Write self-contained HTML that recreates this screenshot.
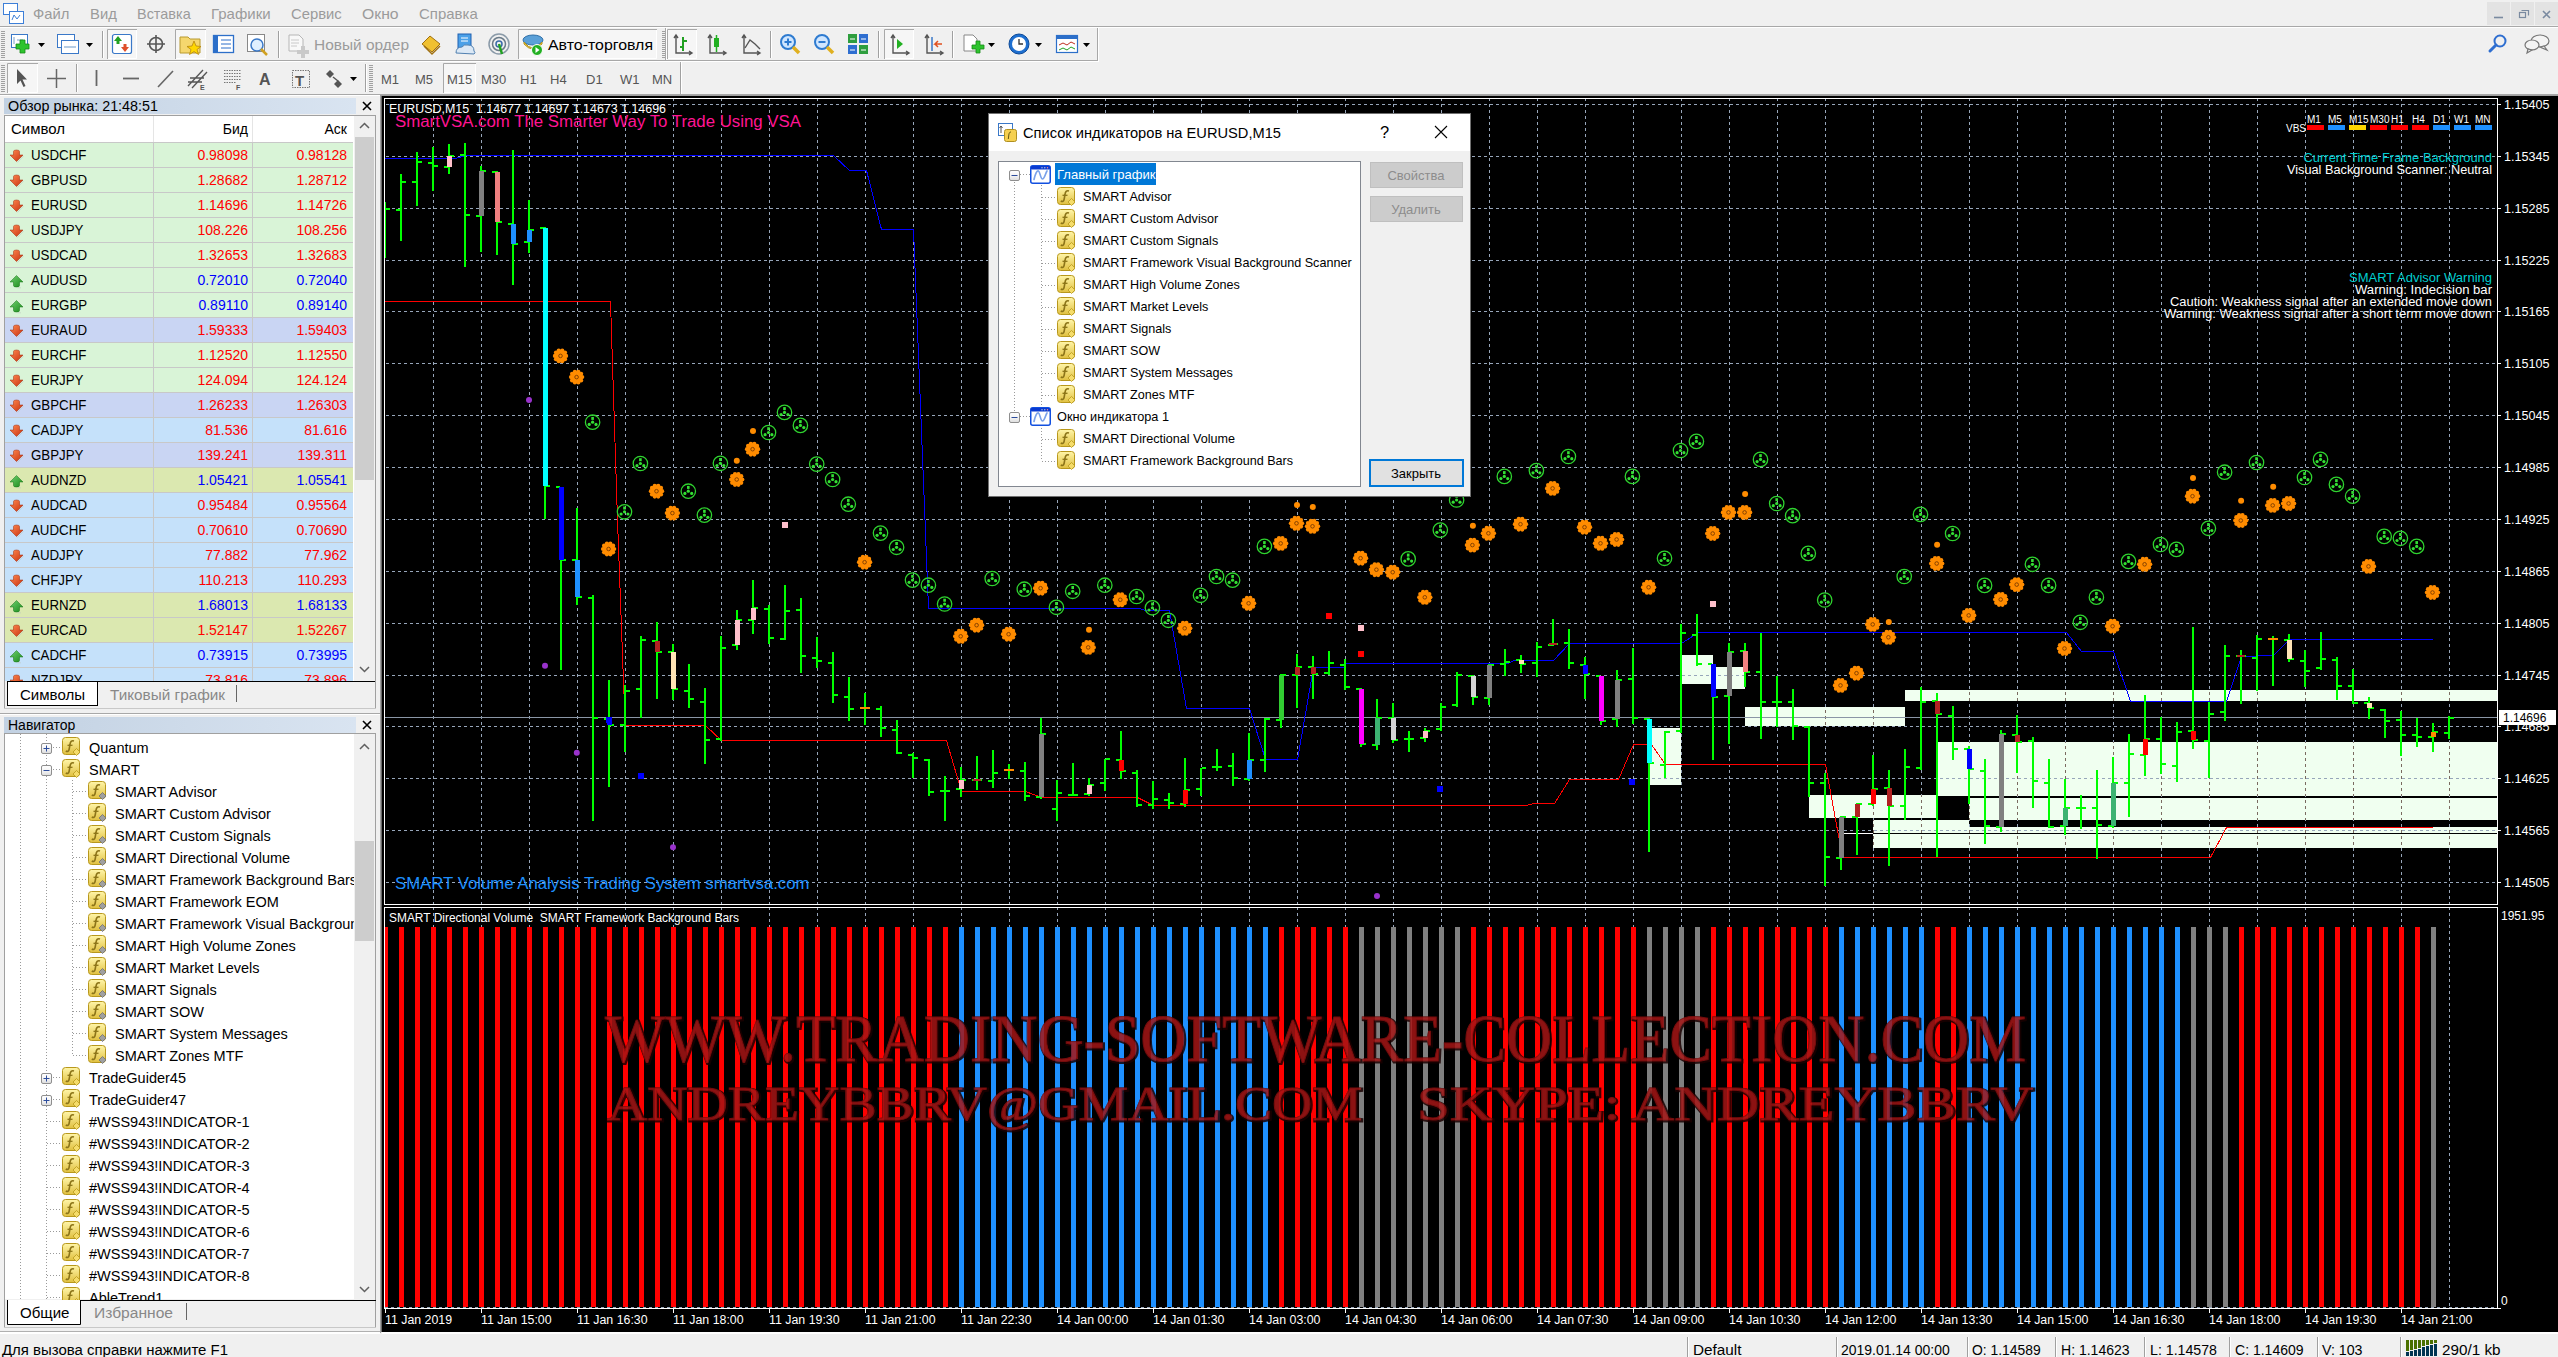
<!DOCTYPE html>
<html><head><meta charset="utf-8"><style>
html,body{margin:0;padding:0;width:2558px;height:1357px;overflow:hidden;background:#f0f0f0;}
body{position:relative;font-family:"Liberation Sans", sans-serif;}
svg text{white-space:pre;}
</style></head><body>
<svg style="position:absolute;left:0;top:0" width="2558" height="1357" font-family='"Liberation Sans", sans-serif'>
<defs>
<linearGradient id="hdr" x1="0" x2="1" y1="0" y2="0"><stop offset="0" stop-color="#c2d1e2"/><stop offset="1" stop-color="#d9e4f1"/></linearGradient>
<linearGradient id="fold" x1="0" x2="0" y1="0" y2="1"><stop offset="0" stop-color="#fff5a8"/><stop offset="1" stop-color="#e0c040"/></linearGradient>
<g id="ind">
 <rect x="0.5" y="0.5" width="17" height="17" rx="3" fill="url(#fold)" stroke="#b8981c"/>
 <path d="M12 4 C9.5 3.2 8.3 4.8 8 7.5 L7.2 12 C6.8 14.5 5.5 15 3.8 14" fill="none" stroke="#8c7418" stroke-width="1.6"/>
 <path d="M5.5 8.3 H10.5" stroke="#8c7418" stroke-width="1.3"/>
 <path d="M14.5 11.5 L18 15 L14.5 18.5 L11 15 Z" fill="#a0a0a0" stroke="#707070" stroke-width="0.8"/>
</g>
<g id="indf">
 <rect x="0.5" y="0.5" width="17" height="17" rx="3" fill="url(#fold)" stroke="#b8981c"/>
 <path d="M12 4 C9.5 3.2 8.3 4.8 8 7.5 L7.2 12 C6.8 14.5 5.5 15 3.8 14" fill="none" stroke="#8c7418" stroke-width="1.6"/>
 <path d="M5.5 8.3 H10.5" stroke="#8c7418" stroke-width="1.3"/>
 <path d="M14.5 11.5 L18 15 L14.5 18.5 L11 15 Z" fill="#f5dc6a" stroke="#b8981c" stroke-width="0.8"/>
</g>
<linearGradient id="gdn" x1="0" x2="1" y1="0" y2="1"><stop offset="0" stop-color="#ff8a50"/><stop offset="1" stop-color="#c83010"/></linearGradient>
<linearGradient id="gup" x1="0" x2="1" y1="0" y2="1"><stop offset="0" stop-color="#70d070"/><stop offset="1" stop-color="#1a8a1a"/></linearGradient>
<g id="dn"><path d="M4.5 12 L1 8 L4.5 8 Z" fill="#000" opacity="0"/><path d="M3.5 1.5 Q3.5 0 6.5 0 Q9.5 0 9.5 1.5 V5 H13 L6.5 11.5 L0 5 H3.5 Z" fill="url(#gdn)" stroke="#a02808" stroke-width="0.5"/><path d="M7.5 12.5 L13.5 6" stroke="#c0c8c0" stroke-width="1" opacity="0.6"/></g>
<g id="up"><path d="M3.5 10.5 Q3.5 12 6.5 12 Q9.5 12 9.5 10.5 V7 H13 L6.5 0.5 L0 7 H3.5 Z" fill="url(#gup)" stroke="#157015" stroke-width="0.5"/><path d="M7.5 12.8 H11" stroke="#c0c8c0" stroke-width="1" opacity="0.6"/></g>
<linearGradient id="bxg" x1="0" x2="0" y1="0" y2="1"><stop offset="0" stop-color="#ffffff"/><stop offset="0.5" stop-color="#f4f4f4"/><stop offset="1" stop-color="#dcdcdc"/></linearGradient>
<g id="plus"><rect x="0.5" y="0.5" width="10" height="10" rx="1.5" fill="url(#bxg)" stroke="#8e8e8e"/><path d="M2.5 5.5 H8.5 M5.5 2.5 V8.5" stroke="#2c4c9c" stroke-width="1"/></g>
<g id="minus"><rect x="0.5" y="0.5" width="10" height="10" rx="1.5" fill="url(#bxg)" stroke="#8e8e8e"/><path d="M2.5 5.5 H8.5" stroke="#2c4c9c" stroke-width="1"/></g>
<g id="chico"><rect x="0.75" y="0.75" width="19.5" height="17.5" rx="2" fill="#fff" stroke="#1250e0" stroke-width="1.5"/><rect x="1" y="1" width="19" height="3.5" rx="1" fill="#0a3ad0"/><circle cx="12" cy="2.8" r="0.7" fill="#bcd"/><circle cx="14.8" cy="2.8" r="0.7" fill="#bcd"/><circle cx="17.5" cy="2.8" r="0.7" fill="#f88"/><path d="M4 14.5 C5.5 8 7 5.5 8.5 6 C10 6.5 10.5 14 12.5 14 C14.5 14 15.5 8 17 6" fill="none" stroke="#7aa2ea" stroke-width="1.7" stroke-linecap="round"/></g>
</defs>

<rect x="0" y="0" width="2558" height="1357" fill="#f0f0f0"/>
<g transform="translate(3,3)"><rect x="0.5" y="0.5" width="14" height="11" fill="#fff" stroke="#3d7fd8"/><rect x="6.5" y="8.5" width="14" height="12" fill="#fff" stroke="#3d7fd8"/><path d="M9 17 L11 12 L14 16 L17 12" stroke="#3d7fd8" fill="none"/></g>
<text x="33" y="19" font-size="15" fill="#9b9b9b" textLength="36.4" lengthAdjust="spacingAndGlyphs">Файл</text>
<text x="90" y="19" font-size="15" fill="#9b9b9b" textLength="26.8" lengthAdjust="spacingAndGlyphs">Вид</text>
<text x="137" y="19" font-size="15" fill="#9b9b9b" textLength="53.7" lengthAdjust="spacingAndGlyphs">Вставка</text>
<text x="211" y="19" font-size="15" fill="#9b9b9b" textLength="59.6" lengthAdjust="spacingAndGlyphs">Графики</text>
<text x="291" y="19" font-size="15" fill="#9b9b9b" textLength="50.7" lengthAdjust="spacingAndGlyphs">Сервис</text>
<text x="362" y="19" font-size="15" fill="#9b9b9b" textLength="36.6" lengthAdjust="spacingAndGlyphs">Окно</text>
<text x="419" y="19" font-size="15" fill="#9b9b9b" textLength="58.7" lengthAdjust="spacingAndGlyphs">Справка</text>
<rect x="2487" y="2" width="23" height="23" fill="#e3e3e3"/>
<rect x="2511" y="2" width="23" height="23" fill="#e3e3e3"/>
<rect x="2535" y="2" width="23" height="23" fill="#e3e3e3"/>
<path d="M2494 17.5 H2503" stroke="#7a8aa0" stroke-width="1.6"/>
<rect x="2519.5" y="12.5" width="6" height="5" fill="none" stroke="#7a8aa0" stroke-width="1.2"/><path d="M2521.5 10.5 H2528.5 V15.5" fill="none" stroke="#7a8aa0" stroke-width="1.2"/>
<path d="M2543 11 L2550 18 M2550 11 L2543 18" stroke="#7a8aa0" stroke-width="1.6"/>
<rect x="0" y="26" width="2558" height="1" fill="#a8a8a8"/>
<rect x="0" y="27" width="2558" height="1" fill="#ffffff"/>
<rect x="0" y="60" width="1098" height="1" fill="#a8a8a8"/>
<rect x="0" y="61" width="1099" height="1" fill="#ffffff"/>
<rect x="1097" y="28" width="1" height="33" fill="#a8a8a8"/>
<rect x="1098" y="28" width="1" height="34" fill="#ffffff"/>
<rect x="0" y="94" width="2558" height="1" fill="#a8a8a8"/>
<rect x="0" y="95" width="380" height="1" fill="#ffffff"/>
<rect x="1" y="31" width="4" height="1" fill="#a0a0a0"/><rect x="1" y="33" width="4" height="1" fill="#a0a0a0"/><rect x="1" y="35" width="4" height="1" fill="#a0a0a0"/><rect x="1" y="37" width="4" height="1" fill="#a0a0a0"/><rect x="1" y="39" width="4" height="1" fill="#a0a0a0"/><rect x="1" y="41" width="4" height="1" fill="#a0a0a0"/><rect x="1" y="43" width="4" height="1" fill="#a0a0a0"/><rect x="1" y="45" width="4" height="1" fill="#a0a0a0"/><rect x="1" y="47" width="4" height="1" fill="#a0a0a0"/><rect x="1" y="49" width="4" height="1" fill="#a0a0a0"/><rect x="1" y="51" width="4" height="1" fill="#a0a0a0"/><rect x="1" y="53" width="4" height="1" fill="#a0a0a0"/><rect x="1" y="55" width="4" height="1" fill="#a0a0a0"/><rect x="1" y="57" width="4" height="1" fill="#a0a0a0"/>
<g transform="translate(11,34)"><rect x="0.5" y="0.5" width="16" height="13" fill="#fff" stroke="#3a78c8"/><path d="M3 3 V10 M6 6 h6" stroke="#7aa0c8"/><path d="M9 6 h5 v4 h4 v5 h-4 v4 h-5 v-4 h-4 v-5 h4 z" fill="#2ec42e" stroke="#168a16" stroke-width="0.8"/></g>
<path d="M38 43 h7 l-3.5 4 z" fill="#000"/>
<g transform="translate(57,34)"><rect x="0.5" y="0.5" width="17" height="13" fill="#fff" stroke="#3a78c8"/><rect x="4.5" y="6.5" width="17" height="13" fill="#fff" stroke="#3a78c8"/><path d="M7 13 h12" stroke="#6a98c8"/></g>
<path d="M86 43 h7 l-3.5 4 z" fill="#000"/>
<rect x="102" y="31" width="1" height="27" fill="#a0a0a0"/><rect x="103" y="31" width="1" height="27" fill="#ffffff"/>
<rect x="107" y="29" width="30" height="30" fill="#f6f6f6"/><path d="M107.5 59 V29.5 H137" fill="none" stroke="#a8a8a8"/><path d="M108 58.5 H136.5 V30" fill="none" stroke="#ffffff"/>
<g transform="translate(112,34)"><rect x="0.5" y="0.5" width="19" height="19" rx="2" fill="#fff" stroke="#3a78c8" stroke-width="1.2"/><path d="M6 2 l4 5 h-2.5 v3 h-3 v-3 h-2.5z" fill="#22a022"/><path d="M13 18 l4 -5 h-2.5 v-3 h-3 v3 h-2.5z" fill="#e0502a"/></g>
<g transform="translate(156,44)" stroke="#555" fill="none" stroke-width="1.6"><circle r="6.5"/><path d="M-9 0 H9 M0 -9 V9"/></g>
<rect x="175" y="29" width="31" height="30" fill="#f6f6f6"/><path d="M175.5 59 V29.5 H206" fill="none" stroke="#a8a8a8"/><path d="M176 58.5 H205.5 V30" fill="none" stroke="#ffffff"/>
<g transform="translate(179,33)"><path d="M1 4 h8 l2 2 h10 v14 h-20z" fill="#f5d76e" stroke="#b89a30"/><path d="M15 8 l2 5 5 0.5 -4 3 1.5 5 -4.5-3 -4.5 3 1.5-5 -4-3 5-0.5z" fill="#ffd700" stroke="#b8860b" stroke-width="0.8"/></g>
<g transform="translate(213,35)"><rect x="0.5" y="0.5" width="20" height="17" fill="#fff" stroke="#2c6fc9" stroke-width="1.3"/><rect x="1" y="1" width="4" height="16" fill="#2c6fc9"/><path d="M8 5 h10 M8 9 h10 M8 13 h10" stroke="#2c6fc9"/></g>
<g transform="translate(247,34)"><rect x="0.5" y="0.5" width="17" height="17" fill="#fff" stroke="#888"/><circle cx="10" cy="11" r="6" fill="#dfefff" stroke="#3a78c8" stroke-width="1.5"/><path d="M14 15 l6 6" stroke="#d0a020" stroke-width="2.5"/></g>
<rect x="278" y="31" width="1" height="27" fill="#a0a0a0"/><rect x="279" y="31" width="1" height="27" fill="#ffffff"/>
<g transform="translate(288,34)" opacity="0.55"><path d="M1 1 h10 l4 4 v12 h-14z" fill="#fff" stroke="#888"/><path d="M3 6 h8 M3 9 h8 M3 12 h6" stroke="#aaa"/><path d="M13 12 h4 v4 h4 v4 h-4 v4 h-4 v-4 h-4 v-4 h4z" fill="#aaa"/></g>
<text x="314" y="50" font-size="15" fill="#9b9b9b" textLength="95.0" lengthAdjust="spacingAndGlyphs">Новый ордер</text>
<g transform="translate(420,34)"><path d="M2 10 L10 2 L20 10 L12 18 Z" fill="#f0c030" stroke="#a07010"/><path d="M4 12 L12 20 L20 12" fill="none" stroke="#a07010" stroke-width="1.5"/></g>
<g transform="translate(455,33)"><rect x="3" y="1" width="13" height="14" fill="#4aa0e8" stroke="#2060b0"/><path d="M6 5 h7 M6 8 h7" stroke="#fff"/><path d="M1 20 q0-6 6-6 q2-3 6-2 q6 0 6 6 q2 2 0 3z" fill="#dbe8f5" stroke="#5080b0"/></g>
<g transform="translate(499,44)" fill="none"><circle r="10" stroke="#8a9aa8" stroke-width="1.5"/><circle r="6.5" stroke="#6a7a88" stroke-width="1.5"/><circle r="3" stroke="#3a6aa8" stroke-width="1.5"/><path d="M0 0 L3 10" stroke="#22a022" stroke-width="2.5"/></g>
<rect x="518" y="29" width="139" height="30" fill="#f6f6f6"/><path d="M518.5 59 V29.5 H657" fill="none" stroke="#a8a8a8"/><path d="M519 58.5 H656.5 V30" fill="none" stroke="#ffffff"/>
<g transform="translate(522,33)"><ellipse cx="11" cy="7" rx="10" ry="5" fill="#5aa0d8" stroke="#3070a8"/><path d="M2 9 q9 12 18 0 v2 q-9 10 -18 0z" fill="#f0d040" stroke="#b09020"/><circle cx="15" cy="17" r="5.5" fill="#22b022" stroke="#fff"/><path d="M13.5 14 l4 3 -4 3z" fill="#fff"/></g>
<text x="548" y="50" font-size="15" fill="#000" textLength="105.0" lengthAdjust="spacingAndGlyphs">Авто-торговля</text>
<rect x="662" y="31" width="4" height="1" fill="#a0a0a0"/><rect x="662" y="33" width="4" height="1" fill="#a0a0a0"/><rect x="662" y="35" width="4" height="1" fill="#a0a0a0"/><rect x="662" y="37" width="4" height="1" fill="#a0a0a0"/><rect x="662" y="39" width="4" height="1" fill="#a0a0a0"/><rect x="662" y="41" width="4" height="1" fill="#a0a0a0"/><rect x="662" y="43" width="4" height="1" fill="#a0a0a0"/><rect x="662" y="45" width="4" height="1" fill="#a0a0a0"/><rect x="662" y="47" width="4" height="1" fill="#a0a0a0"/><rect x="662" y="49" width="4" height="1" fill="#a0a0a0"/><rect x="662" y="51" width="4" height="1" fill="#a0a0a0"/><rect x="662" y="53" width="4" height="1" fill="#a0a0a0"/><rect x="662" y="55" width="4" height="1" fill="#a0a0a0"/><rect x="662" y="57" width="4" height="1" fill="#a0a0a0"/>
<rect x="665" y="28" width="1" height="32" fill="#a8a8a8"/>
<rect x="666" y="28" width="1" height="32" fill="#ffffff"/>
<rect x="667" y="29" width="30" height="30" fill="#f6f6f6"/><path d="M667.5 59 V29.5 H697" fill="none" stroke="#a8a8a8"/><path d="M668 58.5 H696.5 V30" fill="none" stroke="#ffffff"/>
<path d="M676 35 V53 H692 M674 38 l2 -3 2 3 M689 51 l3 2 -3 2" fill="none" stroke="#555" stroke-width="1.4"/>
<path d="M683 37 V51 M680 47 h3 M683 41 h4" stroke="#22a022" stroke-width="2" fill="none"/>
<path d="M710 35 V53 H726 M708 38 l2 -3 2 3 M723 51 l3 2 -3 2" fill="none" stroke="#555" stroke-width="1.4"/>
<rect x="714" y="38" width="5" height="9" fill="#22b022"/>
<path d="M716.5 35 V52" stroke="#22b022" stroke-width="1.5"/>
<path d="M744 35 V53 H760 M742 38 l2 -3 2 3 M757 51 l3 2 -3 2" fill="none" stroke="#555" stroke-width="1.4"/>
<path d="M745 48 L750 40 L755 44 L760 49" stroke="#555" stroke-width="1.4" fill="none"/>
<rect x="770" y="31" width="1" height="27" fill="#a0a0a0"/><rect x="771" y="31" width="1" height="27" fill="#ffffff"/>
<g transform="translate(780,34)"><circle cx="8" cy="8" r="7" fill="#cfe6ff" stroke="#2e7bd0" stroke-width="2"/><path d="M13 13 l6 6" stroke="#e0b020" stroke-width="3.5"/><path d="M4.5 8 h7" stroke="#2e7bd0" stroke-width="2"/><path d="M8 4.5 v7" stroke="#2e7bd0" stroke-width="2"/></g>
<g transform="translate(814,34)"><circle cx="8" cy="8" r="7" fill="#cfe6ff" stroke="#2e7bd0" stroke-width="2"/><path d="M13 13 l6 6" stroke="#e0b020" stroke-width="3.5"/><path d="M4.5 8 h7" stroke="#2e7bd0" stroke-width="2"/></g>
<g transform="translate(848,34)"><rect x="0" y="0" width="9" height="9" fill="#2e9e3e"/><rect x="11" y="0" width="9" height="9" fill="#2e6ed0"/><rect x="0" y="11" width="9" height="9" fill="#2e6ed0"/><rect x="11" y="11" width="9" height="9" fill="#2e9e3e"/><path d="M2 5h5M13 5h5M2 16h5M13 16h5" stroke="#fff"/></g>
<rect x="878" y="31" width="1" height="27" fill="#a0a0a0"/><rect x="879" y="31" width="1" height="27" fill="#ffffff"/>
<rect x="884" y="29" width="30" height="30" fill="#f6f6f6"/><path d="M884.5 59 V29.5 H914" fill="none" stroke="#a8a8a8"/><path d="M885 58.5 H913.5 V30" fill="none" stroke="#ffffff"/>
<path d="M893 35 V53 H909 M891 38 l2 -3 2 3 M906 51 l3 2 -3 2" fill="none" stroke="#555" stroke-width="1.4"/>
<path d="M897 39 l6 5 -6 5z" fill="#22b022"/>
<path d="M927 35 V53 H943 M925 38 l2 -3 2 3 M940 51 l3 2 -3 2" fill="none" stroke="#555" stroke-width="1.4"/>
<path d="M932 37 V51" stroke="#3a78c8" stroke-width="1.5"/><path d="M942 44 h-7 l3 -3 m-3 3 l3 3" stroke="#e05020" stroke-width="1.5" fill="none"/>
<rect x="952" y="31" width="1" height="27" fill="#a0a0a0"/><rect x="953" y="31" width="1" height="27" fill="#ffffff"/>
<g transform="translate(963,34)"><path d="M1 1 h9 l4 4 v12 h-13z" fill="#fff" stroke="#888"/><path d="M9 11 h4 v-4 h4 v4 h4 v4 h-4 v4 h-4 v-4 h-4z" fill="#2ec42e" stroke="#168a16" stroke-width="0.8"/></g>
<path d="M988 43 h7 l-3.5 4 z" fill="#000"/>
<g transform="translate(1019,44)"><circle r="10" fill="#1e6fd0" stroke="#0d4a98"/><circle r="7" fill="#fff"/><path d="M0 -5 V0 H4" stroke="#333" stroke-width="1.3" fill="none"/></g>
<path d="M1035 43 h7 l-3.5 4 z" fill="#000"/>
<g transform="translate(1056,35)"><rect x="0.5" y="0.5" width="21" height="17" fill="#fff" stroke="#2c6fc9" stroke-width="1.2"/><rect x="1" y="1" width="21" height="3" fill="#2c6fc9"/><path d="M3 10 l4 -2 4 2 4 -3 4 2" stroke="#c03020" fill="none"/><path d="M3 15 l4 -2 4 2 4 -3 4 2" stroke="#22a022" fill="none"/></g>
<path d="M1083 43 h7 l-3.5 4 z" fill="#000"/>
<g transform="translate(2489,34)"><circle cx="11" cy="7" r="5.5" fill="none" stroke="#2e6ed0" stroke-width="2"/><path d="M7 11 L1 17" stroke="#2e6ed0" stroke-width="3" stroke-linecap="round"/></g>
<g transform="translate(2524,33)" fill="#f4f4f4" stroke="#777" stroke-width="1.2"><ellipse cx="16" cy="8" rx="9" ry="6"/><path d="M20 13 l3 4 -7-3z"/><ellipse cx="8" cy="12" rx="7" ry="5"/><path d="M4 16 l-1 4 5-3z"/></g>
<rect x="1" y="65" width="4" height="1" fill="#a0a0a0"/><rect x="1" y="67" width="4" height="1" fill="#a0a0a0"/><rect x="1" y="69" width="4" height="1" fill="#a0a0a0"/><rect x="1" y="71" width="4" height="1" fill="#a0a0a0"/><rect x="1" y="73" width="4" height="1" fill="#a0a0a0"/><rect x="1" y="75" width="4" height="1" fill="#a0a0a0"/><rect x="1" y="77" width="4" height="1" fill="#a0a0a0"/><rect x="1" y="79" width="4" height="1" fill="#a0a0a0"/><rect x="1" y="81" width="4" height="1" fill="#a0a0a0"/><rect x="1" y="83" width="4" height="1" fill="#a0a0a0"/><rect x="1" y="85" width="4" height="1" fill="#a0a0a0"/><rect x="1" y="87" width="4" height="1" fill="#a0a0a0"/><rect x="1" y="89" width="4" height="1" fill="#a0a0a0"/><rect x="1" y="91" width="4" height="1" fill="#a0a0a0"/>
<rect x="7" y="63" width="31" height="30" fill="#f6f6f6"/><path d="M7.5 93 V63.5 H38" fill="none" stroke="#a8a8a8"/><path d="M8 92.5 H37.5 V64" fill="none" stroke="#ffffff"/>
<path d="M17 69 L17 84 L20.5 80.5 L23.5 87 L25.5 86 L22.5 79.5 L27 79.5 Z" fill="#555"/>
<path d="M47 78.5 H66 M56.5 69 V88" stroke="#666" stroke-width="1.5"/>
<rect x="76" y="64" width="1" height="28" fill="#a0a0a0"/><rect x="77" y="64" width="1" height="28" fill="#ffffff"/>
<path d="M96.5 70 V86" stroke="#666" stroke-width="1.8"/>
<path d="M123 78.5 H139" stroke="#666" stroke-width="1.8"/>
<path d="M158 87 L173 71" stroke="#666" stroke-width="1.6"/>
<g stroke="#555" stroke-width="1.3"><path d="M188 86 L203 70 M192 88 L207 72 M190 78 h14 M188 82 h14"/></g><text x="200" y="90" font-size="7" font-weight="bold" fill="#555">E</text>
<g stroke="#777" stroke-width="1" stroke-dasharray="1.5 1"><path d="M224 70.5 h17 M224 73.5 h17 M224 76.5 h17 M224 79.5 h17 M224 82.5 h12"/></g><text x="236" y="90" font-size="7" font-weight="bold" fill="#555">F</text>
<text x="259" y="85" font-size="16" font-weight="bold" fill="#555">A</text>
<rect x="292.5" y="70.5" width="17" height="17" fill="none" stroke="#777" stroke-dasharray="1.5 1"/><text x="295" y="86" font-size="15" font-weight="bold" fill="#555">T</text>
<path d="M330 70 l4 4 -4 4 -4-4z M338 80 l4 4 -4 4 -4-4z" fill="#555"/><path d="M333 77 l5 4" stroke="#555" stroke-width="1.5"/>
<path d="M350 77 h7 l-3.5 4 z" fill="#000"/>
<rect x="365" y="64" width="1" height="28" fill="#a0a0a0"/><rect x="366" y="64" width="1" height="28" fill="#ffffff"/>
<rect x="369" y="65" width="4" height="1" fill="#a0a0a0"/><rect x="369" y="67" width="4" height="1" fill="#a0a0a0"/><rect x="369" y="69" width="4" height="1" fill="#a0a0a0"/><rect x="369" y="71" width="4" height="1" fill="#a0a0a0"/><rect x="369" y="73" width="4" height="1" fill="#a0a0a0"/><rect x="369" y="75" width="4" height="1" fill="#a0a0a0"/><rect x="369" y="77" width="4" height="1" fill="#a0a0a0"/><rect x="369" y="79" width="4" height="1" fill="#a0a0a0"/><rect x="369" y="81" width="4" height="1" fill="#a0a0a0"/><rect x="369" y="83" width="4" height="1" fill="#a0a0a0"/><rect x="369" y="85" width="4" height="1" fill="#a0a0a0"/><rect x="369" y="87" width="4" height="1" fill="#a0a0a0"/><rect x="369" y="89" width="4" height="1" fill="#a0a0a0"/><rect x="369" y="91" width="4" height="1" fill="#a0a0a0"/>
<rect x="680" y="62" width="1" height="32" fill="#a8a8a8"/>
<rect x="681" y="62" width="1" height="32" fill="#ffffff"/>
<rect x="443" y="63" width="33" height="30" fill="#f6f6f6"/><path d="M443.5 93 V63.5 H476" fill="none" stroke="#a8a8a8"/><path d="M444 92.5 H475.5 V64" fill="none" stroke="#ffffff"/>
<text x="381" y="84" font-size="13" fill="#555">M1</text>
<text x="415" y="84" font-size="13" fill="#555">M5</text>
<text x="447" y="84" font-size="13" fill="#555">M15</text>
<text x="481" y="84" font-size="13" fill="#555">M30</text>
<text x="520" y="84" font-size="13" fill="#555">H1</text>
<text x="550" y="84" font-size="13" fill="#555">H4</text>
<text x="586" y="84" font-size="13" fill="#555">D1</text>
<text x="620" y="84" font-size="13" fill="#555">W1</text>
<text x="652" y="84" font-size="13" fill="#555">MN</text>
<rect x="680" y="64" width="1" height="28" fill="#a0a0a0"/><rect x="681" y="64" width="1" height="28" fill="#ffffff"/>
<rect x="380" y="95" width="2178" height="1" fill="#a0a0a0"/>
<rect x="380" y="95" width="1" height="1238" fill="#a0a0a0"/>
<rect x="381" y="96" width="1" height="1236" fill="#696969"/>
<rect x="4" y="98" width="352" height="16" fill="url(#hdr)"/>
<text x="8" y="111" font-size="14" fill="#000" textLength="150.0" lengthAdjust="spacingAndGlyphs">Обзор рынка: 21:48:51</text>
<path d="M363 102 L371 110 M371 102 L363 110" stroke="#000" stroke-width="1.6"/>
<rect x="4" y="115" width="372" height="1" fill="#a0a0a0"/>
<rect x="4" y="115" width="1" height="594" fill="#a0a0a0"/>
<rect x="5" y="116" width="349" height="565" fill="#ffffff"/>
<rect x="375" y="115" width="1" height="594" fill="#a0a0a0"/>
<text x="11" y="134" font-size="14" fill="#000" textLength="54.0" lengthAdjust="spacingAndGlyphs">Символ</text>
<text x="248" y="134" font-size="14" fill="#000" text-anchor="end">Бид</text>
<text x="347" y="134" font-size="14" fill="#000" text-anchor="end">Аск</text>
<rect x="153" y="116" width="1" height="26" fill="#e5e5e5"/>
<rect x="252" y="116" width="1" height="26" fill="#e5e5e5"/>
<svg x="0" y="0" width="2558" height="681" overflow="hidden">
<rect x="5" y="142" width="348" height="1" fill="#c8c8c8"/>
<rect x="5" y="143" width="348" height="24" fill="#d9f4d7"/>
<rect x="153" y="143" width="1" height="24" fill="#c8c8c8"/>
<rect x="252" y="143" width="1" height="24" fill="#c8c8c8"/>
<use href="#dn" x="10" y="150"/>
<text x="31" y="160" font-size="14" fill="#000" textLength="55.4" lengthAdjust="spacingAndGlyphs">USDCHF</text>
<text x="248" y="160" font-size="14" fill="#ff0000" text-anchor="end">0.98098</text>
<text x="347" y="160" font-size="14" fill="#ff0000" text-anchor="end">0.98128</text>
<rect x="5" y="167" width="348" height="1" fill="#c8c8c8"/>
<rect x="5" y="168" width="348" height="24" fill="#d9f4d7"/>
<rect x="153" y="168" width="1" height="24" fill="#c8c8c8"/>
<rect x="252" y="168" width="1" height="24" fill="#c8c8c8"/>
<use href="#dn" x="10" y="175"/>
<text x="31" y="185" font-size="14" fill="#000" textLength="56.2" lengthAdjust="spacingAndGlyphs">GBPUSD</text>
<text x="248" y="185" font-size="14" fill="#ff0000" text-anchor="end">1.28682</text>
<text x="347" y="185" font-size="14" fill="#ff0000" text-anchor="end">1.28712</text>
<rect x="5" y="192" width="348" height="1" fill="#c8c8c8"/>
<rect x="5" y="193" width="348" height="24" fill="#d9f4d7"/>
<rect x="153" y="193" width="1" height="24" fill="#c8c8c8"/>
<rect x="252" y="193" width="1" height="24" fill="#c8c8c8"/>
<use href="#dn" x="10" y="200"/>
<text x="31" y="210" font-size="14" fill="#000" textLength="56.2" lengthAdjust="spacingAndGlyphs">EURUSD</text>
<text x="248" y="210" font-size="14" fill="#ff0000" text-anchor="end">1.14696</text>
<text x="347" y="210" font-size="14" fill="#ff0000" text-anchor="end">1.14726</text>
<rect x="5" y="217" width="348" height="1" fill="#c8c8c8"/>
<rect x="5" y="218" width="348" height="24" fill="#d9f4d7"/>
<rect x="153" y="218" width="1" height="24" fill="#c8c8c8"/>
<rect x="252" y="218" width="1" height="24" fill="#c8c8c8"/>
<use href="#dn" x="10" y="225"/>
<text x="31" y="235" font-size="14" fill="#000" textLength="52.5" lengthAdjust="spacingAndGlyphs">USDJPY</text>
<text x="248" y="235" font-size="14" fill="#ff0000" text-anchor="end">108.226</text>
<text x="347" y="235" font-size="14" fill="#ff0000" text-anchor="end">108.256</text>
<rect x="5" y="242" width="348" height="1" fill="#c8c8c8"/>
<rect x="5" y="243" width="348" height="24" fill="#d9f4d7"/>
<rect x="153" y="243" width="1" height="24" fill="#c8c8c8"/>
<rect x="252" y="243" width="1" height="24" fill="#c8c8c8"/>
<use href="#dn" x="10" y="250"/>
<text x="31" y="260" font-size="14" fill="#000" textLength="56.2" lengthAdjust="spacingAndGlyphs">USDCAD</text>
<text x="248" y="260" font-size="14" fill="#ff0000" text-anchor="end">1.32653</text>
<text x="347" y="260" font-size="14" fill="#ff0000" text-anchor="end">1.32683</text>
<rect x="5" y="267" width="348" height="1" fill="#c8c8c8"/>
<rect x="5" y="268" width="348" height="24" fill="#d9f4d7"/>
<rect x="153" y="268" width="1" height="24" fill="#c8c8c8"/>
<rect x="252" y="268" width="1" height="24" fill="#c8c8c8"/>
<use href="#up" x="10" y="275"/>
<text x="31" y="285" font-size="14" fill="#000" textLength="56.2" lengthAdjust="spacingAndGlyphs">AUDUSD</text>
<text x="248" y="285" font-size="14" fill="#0000ff" text-anchor="end">0.72010</text>
<text x="347" y="285" font-size="14" fill="#0000ff" text-anchor="end">0.72040</text>
<rect x="5" y="292" width="348" height="1" fill="#c8c8c8"/>
<rect x="5" y="293" width="348" height="24" fill="#d9f4d7"/>
<rect x="153" y="293" width="1" height="24" fill="#c8c8c8"/>
<rect x="252" y="293" width="1" height="24" fill="#c8c8c8"/>
<use href="#up" x="10" y="300"/>
<text x="31" y="310" font-size="14" fill="#000" textLength="56.2" lengthAdjust="spacingAndGlyphs">EURGBP</text>
<text x="248" y="310" font-size="14" fill="#0000ff" text-anchor="end">0.89110</text>
<text x="347" y="310" font-size="14" fill="#0000ff" text-anchor="end">0.89140</text>
<rect x="5" y="317" width="348" height="1" fill="#c8c8c8"/>
<rect x="5" y="318" width="348" height="24" fill="#c9d5f3"/>
<rect x="153" y="318" width="1" height="24" fill="#c8c8c8"/>
<rect x="252" y="318" width="1" height="24" fill="#c8c8c8"/>
<use href="#dn" x="10" y="325"/>
<text x="31" y="335" font-size="14" fill="#000" textLength="56.2" lengthAdjust="spacingAndGlyphs">EURAUD</text>
<text x="248" y="335" font-size="14" fill="#ff0000" text-anchor="end">1.59333</text>
<text x="347" y="335" font-size="14" fill="#ff0000" text-anchor="end">1.59403</text>
<rect x="5" y="342" width="348" height="1" fill="#c8c8c8"/>
<rect x="5" y="343" width="348" height="24" fill="#d9f4d7"/>
<rect x="153" y="343" width="1" height="24" fill="#c8c8c8"/>
<rect x="252" y="343" width="1" height="24" fill="#c8c8c8"/>
<use href="#dn" x="10" y="350"/>
<text x="31" y="360" font-size="14" fill="#000" textLength="55.4" lengthAdjust="spacingAndGlyphs">EURCHF</text>
<text x="248" y="360" font-size="14" fill="#ff0000" text-anchor="end">1.12520</text>
<text x="347" y="360" font-size="14" fill="#ff0000" text-anchor="end">1.12550</text>
<rect x="5" y="367" width="348" height="1" fill="#c8c8c8"/>
<rect x="5" y="368" width="348" height="24" fill="#d9f4d7"/>
<rect x="153" y="368" width="1" height="24" fill="#c8c8c8"/>
<rect x="252" y="368" width="1" height="24" fill="#c8c8c8"/>
<use href="#dn" x="10" y="375"/>
<text x="31" y="385" font-size="14" fill="#000" textLength="52.5" lengthAdjust="spacingAndGlyphs">EURJPY</text>
<text x="248" y="385" font-size="14" fill="#ff0000" text-anchor="end">124.094</text>
<text x="347" y="385" font-size="14" fill="#ff0000" text-anchor="end">124.124</text>
<rect x="5" y="392" width="348" height="1" fill="#c8c8c8"/>
<rect x="5" y="393" width="348" height="24" fill="#c9d5f3"/>
<rect x="153" y="393" width="1" height="24" fill="#c8c8c8"/>
<rect x="252" y="393" width="1" height="24" fill="#c8c8c8"/>
<use href="#dn" x="10" y="400"/>
<text x="31" y="410" font-size="14" fill="#000" textLength="55.4" lengthAdjust="spacingAndGlyphs">GBPCHF</text>
<text x="248" y="410" font-size="14" fill="#ff0000" text-anchor="end">1.26233</text>
<text x="347" y="410" font-size="14" fill="#ff0000" text-anchor="end">1.26303</text>
<rect x="5" y="417" width="348" height="1" fill="#c8c8c8"/>
<rect x="5" y="418" width="348" height="24" fill="#c5e1fa"/>
<rect x="153" y="418" width="1" height="24" fill="#c8c8c8"/>
<rect x="252" y="418" width="1" height="24" fill="#c8c8c8"/>
<use href="#dn" x="10" y="425"/>
<text x="31" y="435" font-size="14" fill="#000" textLength="52.5" lengthAdjust="spacingAndGlyphs">CADJPY</text>
<text x="248" y="435" font-size="14" fill="#ff0000" text-anchor="end">81.536</text>
<text x="347" y="435" font-size="14" fill="#ff0000" text-anchor="end">81.616</text>
<rect x="5" y="442" width="348" height="1" fill="#c8c8c8"/>
<rect x="5" y="443" width="348" height="24" fill="#c9d5f3"/>
<rect x="153" y="443" width="1" height="24" fill="#c8c8c8"/>
<rect x="252" y="443" width="1" height="24" fill="#c8c8c8"/>
<use href="#dn" x="10" y="450"/>
<text x="31" y="460" font-size="14" fill="#000" textLength="52.5" lengthAdjust="spacingAndGlyphs">GBPJPY</text>
<text x="248" y="460" font-size="14" fill="#ff0000" text-anchor="end">139.241</text>
<text x="347" y="460" font-size="14" fill="#ff0000" text-anchor="end">139.311</text>
<rect x="5" y="467" width="348" height="1" fill="#c8c8c8"/>
<rect x="5" y="468" width="348" height="24" fill="#dbe8b0"/>
<rect x="153" y="468" width="1" height="24" fill="#c8c8c8"/>
<rect x="252" y="468" width="1" height="24" fill="#c8c8c8"/>
<use href="#up" x="10" y="475"/>
<text x="31" y="485" font-size="14" fill="#000" textLength="55.4" lengthAdjust="spacingAndGlyphs">AUDNZD</text>
<text x="248" y="485" font-size="14" fill="#0000ff" text-anchor="end">1.05421</text>
<text x="347" y="485" font-size="14" fill="#0000ff" text-anchor="end">1.05541</text>
<rect x="5" y="492" width="348" height="1" fill="#c8c8c8"/>
<rect x="5" y="493" width="348" height="24" fill="#c5e1fa"/>
<rect x="153" y="493" width="1" height="24" fill="#c8c8c8"/>
<rect x="252" y="493" width="1" height="24" fill="#c8c8c8"/>
<use href="#dn" x="10" y="500"/>
<text x="31" y="510" font-size="14" fill="#000" textLength="56.2" lengthAdjust="spacingAndGlyphs">AUDCAD</text>
<text x="248" y="510" font-size="14" fill="#ff0000" text-anchor="end">0.95484</text>
<text x="347" y="510" font-size="14" fill="#ff0000" text-anchor="end">0.95564</text>
<rect x="5" y="517" width="348" height="1" fill="#c8c8c8"/>
<rect x="5" y="518" width="348" height="24" fill="#c5e1fa"/>
<rect x="153" y="518" width="1" height="24" fill="#c8c8c8"/>
<rect x="252" y="518" width="1" height="24" fill="#c8c8c8"/>
<use href="#dn" x="10" y="525"/>
<text x="31" y="535" font-size="14" fill="#000" textLength="55.4" lengthAdjust="spacingAndGlyphs">AUDCHF</text>
<text x="248" y="535" font-size="14" fill="#ff0000" text-anchor="end">0.70610</text>
<text x="347" y="535" font-size="14" fill="#ff0000" text-anchor="end">0.70690</text>
<rect x="5" y="542" width="348" height="1" fill="#c8c8c8"/>
<rect x="5" y="543" width="348" height="24" fill="#c5e1fa"/>
<rect x="153" y="543" width="1" height="24" fill="#c8c8c8"/>
<rect x="252" y="543" width="1" height="24" fill="#c8c8c8"/>
<use href="#dn" x="10" y="550"/>
<text x="31" y="560" font-size="14" fill="#000" textLength="52.5" lengthAdjust="spacingAndGlyphs">AUDJPY</text>
<text x="248" y="560" font-size="14" fill="#ff0000" text-anchor="end">77.882</text>
<text x="347" y="560" font-size="14" fill="#ff0000" text-anchor="end">77.962</text>
<rect x="5" y="567" width="348" height="1" fill="#c8c8c8"/>
<rect x="5" y="568" width="348" height="24" fill="#c5e1fa"/>
<rect x="153" y="568" width="1" height="24" fill="#c8c8c8"/>
<rect x="252" y="568" width="1" height="24" fill="#c8c8c8"/>
<use href="#dn" x="10" y="575"/>
<text x="31" y="585" font-size="14" fill="#000" textLength="51.7" lengthAdjust="spacingAndGlyphs">CHFJPY</text>
<text x="248" y="585" font-size="14" fill="#ff0000" text-anchor="end">110.213</text>
<text x="347" y="585" font-size="14" fill="#ff0000" text-anchor="end">110.293</text>
<rect x="5" y="592" width="348" height="1" fill="#c8c8c8"/>
<rect x="5" y="593" width="348" height="24" fill="#dbe8b0"/>
<rect x="153" y="593" width="1" height="24" fill="#c8c8c8"/>
<rect x="252" y="593" width="1" height="24" fill="#c8c8c8"/>
<use href="#up" x="10" y="600"/>
<text x="31" y="610" font-size="14" fill="#000" textLength="55.4" lengthAdjust="spacingAndGlyphs">EURNZD</text>
<text x="248" y="610" font-size="14" fill="#0000ff" text-anchor="end">1.68013</text>
<text x="347" y="610" font-size="14" fill="#0000ff" text-anchor="end">1.68133</text>
<rect x="5" y="617" width="348" height="1" fill="#c8c8c8"/>
<rect x="5" y="618" width="348" height="24" fill="#dbe8b0"/>
<rect x="153" y="618" width="1" height="24" fill="#c8c8c8"/>
<rect x="252" y="618" width="1" height="24" fill="#c8c8c8"/>
<use href="#dn" x="10" y="625"/>
<text x="31" y="635" font-size="14" fill="#000" textLength="56.2" lengthAdjust="spacingAndGlyphs">EURCAD</text>
<text x="248" y="635" font-size="14" fill="#ff0000" text-anchor="end">1.52147</text>
<text x="347" y="635" font-size="14" fill="#ff0000" text-anchor="end">1.52267</text>
<rect x="5" y="642" width="348" height="1" fill="#c8c8c8"/>
<rect x="5" y="643" width="348" height="24" fill="#c5e1fa"/>
<rect x="153" y="643" width="1" height="24" fill="#c8c8c8"/>
<rect x="252" y="643" width="1" height="24" fill="#c8c8c8"/>
<use href="#up" x="10" y="650"/>
<text x="31" y="660" font-size="14" fill="#000" textLength="55.4" lengthAdjust="spacingAndGlyphs">CADCHF</text>
<text x="248" y="660" font-size="14" fill="#0000ff" text-anchor="end">0.73915</text>
<text x="347" y="660" font-size="14" fill="#0000ff" text-anchor="end">0.73995</text>
<rect x="5" y="667" width="348" height="1" fill="#c8c8c8"/>
<rect x="5" y="668" width="348" height="24" fill="#c5e1fa"/>
<rect x="153" y="668" width="1" height="24" fill="#c8c8c8"/>
<rect x="252" y="668" width="1" height="24" fill="#c8c8c8"/>
<use href="#dn" x="10" y="675"/>
<text x="31" y="685" font-size="14" fill="#000" textLength="51.7" lengthAdjust="spacingAndGlyphs">NZDJPY</text>
<text x="248" y="685" font-size="14" fill="#ff0000" text-anchor="end">73.816</text>
<text x="347" y="685" font-size="14" fill="#ff0000" text-anchor="end">73.896</text>
</svg>
<rect x="354" y="116" width="21" height="565" fill="#f0f0f0"/>
<rect x="355" y="137" width="19" height="343" fill="#cdcdcd"/>
<path d="M360 128 L364.5 123.5 L369 128" fill="none" stroke="#606060" stroke-width="1.5"/>
<path d="M360 667 L364.5 671.5 L369 667" fill="none" stroke="#606060" stroke-width="1.5"/>
<rect x="97" y="681" width="278" height="1" fill="#000"/>
<rect x="7" y="681" width="91" height="25" fill="#fff"/>
<rect x="7.5" y="681.5" width="90" height="24" fill="none" stroke="#000"/>
<text x="20" y="700" font-size="14" fill="#000" textLength="65.0" lengthAdjust="spacingAndGlyphs">Символы</text>
<text x="110" y="700" font-size="14" fill="#888" textLength="115.0" lengthAdjust="spacingAndGlyphs">Тиковый график</text>
<rect x="236" y="685" width="1" height="17" fill="#666"/>
<rect x="4" y="708" width="372" height="1" fill="#c8c8c8"/>
<rect x="0" y="713" width="380" height="1" fill="#a8a8a8"/>
<rect x="0" y="714" width="380" height="1" fill="#fff"/>
<rect x="4" y="717" width="352" height="16" fill="url(#hdr)"/>
<text x="8" y="730" font-size="14" fill="#000">Навигатор</text>
<path d="M363 721 L371 729 M371 721 L363 729" stroke="#000" stroke-width="1.6"/>
<rect x="4" y="733" width="372" height="1" fill="#a0a0a0"/>
<rect x="4" y="733" width="1" height="594" fill="#a0a0a0"/>
<rect x="375" y="733" width="1" height="594" fill="#a0a0a0"/>
<rect x="5" y="734" width="349" height="565" fill="#ffffff"/>
<svg x="0" y="734" width="354" height="566" overflow="hidden"><g transform="translate(0,-734)">
<path d="M20.5 734 V1299" stroke="#9a9a9a" stroke-dasharray="1 2"/>
<path d="M46.5 734 V1299" stroke="#9a9a9a" stroke-dasharray="1 2"/>
<path d="M72.5 780 V1055" stroke="#9a9a9a" stroke-dasharray="1 2"/>
<path d="M47 747.5 H62" stroke="#9a9a9a" stroke-dasharray="1 2"/>
<use href="#plus" x="41" y="743"/>
<use href="#indf" x="62" y="737"/>
<text x="89" y="753" font-size="14.5" fill="#000">Quantum</text>
<path d="M47 769.5 H62" stroke="#9a9a9a" stroke-dasharray="1 2"/>
<use href="#minus" x="41" y="765"/>
<use href="#indf" x="62" y="759"/>
<text x="89" y="775" font-size="14.5" fill="#000">SMART</text>
<path d="M73 791.5 H88" stroke="#9a9a9a" stroke-dasharray="1 2"/>
<use href="#ind" x="88" y="781"/>
<text x="115" y="797" font-size="14.5" fill="#000">SMART Advisor</text>
<path d="M73 813.5 H88" stroke="#9a9a9a" stroke-dasharray="1 2"/>
<use href="#ind" x="88" y="803"/>
<text x="115" y="819" font-size="14.5" fill="#000">SMART Custom Advisor</text>
<path d="M73 835.5 H88" stroke="#9a9a9a" stroke-dasharray="1 2"/>
<use href="#ind" x="88" y="825"/>
<text x="115" y="841" font-size="14.5" fill="#000">SMART Custom Signals</text>
<path d="M73 857.5 H88" stroke="#9a9a9a" stroke-dasharray="1 2"/>
<use href="#ind" x="88" y="847"/>
<text x="115" y="863" font-size="14.5" fill="#000">SMART Directional Volume</text>
<path d="M73 879.5 H88" stroke="#9a9a9a" stroke-dasharray="1 2"/>
<use href="#ind" x="88" y="869"/>
<text x="115" y="885" font-size="14.5" fill="#000">SMART Framework Background Bars</text>
<path d="M73 901.5 H88" stroke="#9a9a9a" stroke-dasharray="1 2"/>
<use href="#ind" x="88" y="891"/>
<text x="115" y="907" font-size="14.5" fill="#000">SMART Framework EOM</text>
<path d="M73 923.5 H88" stroke="#9a9a9a" stroke-dasharray="1 2"/>
<use href="#ind" x="88" y="913"/>
<text x="115" y="929" font-size="14.5" fill="#000">SMART Framework Visual Background</text>
<path d="M73 945.5 H88" stroke="#9a9a9a" stroke-dasharray="1 2"/>
<use href="#ind" x="88" y="935"/>
<text x="115" y="951" font-size="14.5" fill="#000">SMART High Volume Zones</text>
<path d="M73 967.5 H88" stroke="#9a9a9a" stroke-dasharray="1 2"/>
<use href="#ind" x="88" y="957"/>
<text x="115" y="973" font-size="14.5" fill="#000">SMART Market Levels</text>
<path d="M73 989.5 H88" stroke="#9a9a9a" stroke-dasharray="1 2"/>
<use href="#ind" x="88" y="979"/>
<text x="115" y="995" font-size="14.5" fill="#000">SMART Signals</text>
<path d="M73 1011.5 H88" stroke="#9a9a9a" stroke-dasharray="1 2"/>
<use href="#ind" x="88" y="1001"/>
<text x="115" y="1017" font-size="14.5" fill="#000">SMART SOW</text>
<path d="M73 1033.5 H88" stroke="#9a9a9a" stroke-dasharray="1 2"/>
<use href="#ind" x="88" y="1023"/>
<text x="115" y="1039" font-size="14.5" fill="#000">SMART System Messages</text>
<path d="M73 1055.5 H88" stroke="#9a9a9a" stroke-dasharray="1 2"/>
<use href="#ind" x="88" y="1045"/>
<text x="115" y="1061" font-size="14.5" fill="#000">SMART Zones MTF</text>
<path d="M47 1077.5 H62" stroke="#9a9a9a" stroke-dasharray="1 2"/>
<use href="#plus" x="41" y="1073"/>
<use href="#indf" x="62" y="1067"/>
<text x="89" y="1083" font-size="14.5" fill="#000">TradeGuider45</text>
<path d="M47 1099.5 H62" stroke="#9a9a9a" stroke-dasharray="1 2"/>
<use href="#plus" x="41" y="1095"/>
<use href="#indf" x="62" y="1089"/>
<text x="89" y="1105" font-size="14.5" fill="#000">TradeGuider47</text>
<path d="M47 1121.5 H62" stroke="#9a9a9a" stroke-dasharray="1 2"/>
<use href="#indf" x="62" y="1111"/>
<text x="89" y="1127" font-size="14.5" fill="#000">#WSS943!INDICATOR-1</text>
<path d="M47 1143.5 H62" stroke="#9a9a9a" stroke-dasharray="1 2"/>
<use href="#indf" x="62" y="1133"/>
<text x="89" y="1149" font-size="14.5" fill="#000">#WSS943!INDICATOR-2</text>
<path d="M47 1165.5 H62" stroke="#9a9a9a" stroke-dasharray="1 2"/>
<use href="#indf" x="62" y="1155"/>
<text x="89" y="1171" font-size="14.5" fill="#000">#WSS943!INDICATOR-3</text>
<path d="M47 1187.5 H62" stroke="#9a9a9a" stroke-dasharray="1 2"/>
<use href="#indf" x="62" y="1177"/>
<text x="89" y="1193" font-size="14.5" fill="#000">#WSS943!INDICATOR-4</text>
<path d="M47 1209.5 H62" stroke="#9a9a9a" stroke-dasharray="1 2"/>
<use href="#indf" x="62" y="1199"/>
<text x="89" y="1215" font-size="14.5" fill="#000">#WSS943!INDICATOR-5</text>
<path d="M47 1231.5 H62" stroke="#9a9a9a" stroke-dasharray="1 2"/>
<use href="#indf" x="62" y="1221"/>
<text x="89" y="1237" font-size="14.5" fill="#000">#WSS943!INDICATOR-6</text>
<path d="M47 1253.5 H62" stroke="#9a9a9a" stroke-dasharray="1 2"/>
<use href="#indf" x="62" y="1243"/>
<text x="89" y="1259" font-size="14.5" fill="#000">#WSS943!INDICATOR-7</text>
<path d="M47 1275.5 H62" stroke="#9a9a9a" stroke-dasharray="1 2"/>
<use href="#indf" x="62" y="1265"/>
<text x="89" y="1281" font-size="14.5" fill="#000">#WSS943!INDICATOR-8</text>
<path d="M47 1297.5 H62" stroke="#9a9a9a" stroke-dasharray="1 2"/>
<use href="#indf" x="62" y="1287"/>
<text x="89" y="1303" font-size="14.5" fill="#000">AbleTrend1</text>
</g></svg>
<rect x="354" y="734" width="21" height="565" fill="#f0f0f0"/>
<rect x="355" y="841" width="19" height="100" fill="#cdcdcd"/>
<path d="M360 749 L364.5 744.5 L369 749" fill="none" stroke="#606060" stroke-width="1.5"/>
<path d="M360 1287 L364.5 1291.5 L369 1287" fill="none" stroke="#606060" stroke-width="1.5"/>
<rect x="80" y="1300" width="296" height="1" fill="#000"/>
<rect x="7" y="1300" width="74" height="25" fill="#fff"/>
<path d="M7.5 1300 V1324.5 H80.5 V1300" fill="none" stroke="#000"/>
<text x="20" y="1318" font-size="14" fill="#000" textLength="49.5" lengthAdjust="spacingAndGlyphs">Общие</text>
<text x="94" y="1318" font-size="14" fill="#888" textLength="79.0" lengthAdjust="spacingAndGlyphs">Избранное</text>
<rect x="186" y="1303" width="1" height="17" fill="#666"/>
<rect x="4" y="1327" width="372" height="1" fill="#c8c8c8"/>
<rect x="0" y="1331" width="380" height="1" fill="#b0b0b0"/>
<rect x="0" y="1332" width="380" height="2" fill="#ffffff"/>
</svg>
<svg style="position:absolute;left:0;top:0" width="2558" height="1357">
<defs><clipPath id="cm"><rect x="385" y="99" width="2112" height="805"/></clipPath><clipPath id="cs"><rect x="385" y="908" width="2112" height="400"/></clipPath><g id="flw"><circle r="5.8" fill="#ff8c00"/><circle cx="5.60" cy="0.00" r="2.1" fill="#ff8c00"/><circle cx="4.53" cy="3.29" r="2.1" fill="#ff8c00"/><circle cx="1.73" cy="5.33" r="2.1" fill="#ff8c00"/><circle cx="-1.73" cy="5.33" r="2.1" fill="#ff8c00"/><circle cx="-4.53" cy="3.29" r="2.1" fill="#ff8c00"/><circle cx="-5.60" cy="0.00" r="2.1" fill="#ff8c00"/><circle cx="-4.53" cy="-3.29" r="2.1" fill="#ff8c00"/><circle cx="-1.73" cy="-5.33" r="2.1" fill="#ff8c00"/><circle cx="1.73" cy="-5.33" r="2.1" fill="#ff8c00"/><circle cx="4.53" cy="-3.29" r="2.1" fill="#ff8c00"/><circle r="1.8" fill="none" stroke="#7a3a00" stroke-width="0.9"/></g><g id="cir"><circle r="7.2" fill="none" stroke="#2fd42f" stroke-width="1.3"/><circle cx="0" cy="0" r="1.6" fill="#33e033"/><rect x="-1.3" y="-5.3" width="2.6" height="3" fill="#33e033"/><circle cx="-3.4" cy="2.2" r="1.6" fill="#33e033"/><circle cx="3.4" cy="2.2" r="1.6" fill="#33e033"/></g></defs>
<rect x="382" y="96" width="2176" height="1236" fill="#000"/>
<g clip-path="url(#cm)" shape-rendering="crispEdges">
<rect x="1650" y="728" width="31" height="57" fill="#f0fff0"/>
<rect x="1681" y="655" width="32" height="29" fill="#f0fff0"/>
<rect x="1713" y="667" width="32" height="22" fill="#f0fff0"/>
<rect x="1745" y="707" width="160" height="19" fill="#f0fff0"/>
<rect x="1905" y="690" width="592" height="11" fill="#f0fff0"/>
<rect x="1809" y="795" width="128" height="23" fill="#f0fff0"/>
<rect x="1873" y="820" width="96" height="28" fill="#f0fff0"/>
<rect x="1969" y="827" width="528" height="21" fill="#f0fff0"/>
<rect x="1937" y="742" width="560" height="54" fill="#f0fff0"/>
<rect x="1969" y="798" width="528" height="22" fill="#f0fff0"/>
<path d="M386 104.5H2497M386 156.5H2497M386 208.5H2497M386 260.5H2497M386 311.5H2497M386 363.5H2497M386 415.5H2497M386 467.5H2497M386 519.5H2497M386 571.5H2497M386 623.5H2497M386 675.5H2497M386 726.5H2497M386 778.5H2497M386 830.5H2497M386 882.5H2497M433.5 98V904M481.5 98V904M529.5 98V904M577.5 98V904M625.5 98V904M673.5 98V904M721.5 98V904M769.5 98V904M817.5 98V904M865.5 98V904M913.5 98V904M961.5 98V904M1009.5 98V904M1057.5 98V904M1105.5 98V904M1153.5 98V904M1201.5 98V904M1249.5 98V904M1297.5 98V904M1345.5 98V904M1393.5 98V904M1441.5 98V904M1489.5 98V904M1537.5 98V904M1585.5 98V904M1633.5 98V904M1681.5 98V904M1729.5 98V904M1777.5 98V904M1825.5 98V904M1873.5 98V904M1921.5 98V904M1969.5 98V904M2017.5 98V904M2065.5 98V904M2113.5 98V904M2161.5 98V904M2209.5 98V904M2257.5 98V904M2305.5 98V904M2353.5 98V904M2401.5 98V904M2449.5 98V904M2497.5 98V904" stroke="#97a6ba" stroke-width="1" stroke-dasharray="3 3" fill="none"/>
<clipPath id="cz"><rect x="1650" y="728" width="31" height="57"/><rect x="1681" y="655" width="32" height="29"/><rect x="1713" y="667" width="32" height="22"/><rect x="1745" y="707" width="160" height="19"/><rect x="1905" y="690" width="592" height="11"/><rect x="1809" y="795" width="128" height="23"/><rect x="1873" y="820" width="96" height="28"/><rect x="1969" y="827" width="528" height="21"/><rect x="1937" y="742" width="560" height="54"/><rect x="1969" y="798" width="528" height="22"/></clipPath>
<path clip-path="url(#cz)" d="M433.5 98V904M481.5 98V904M529.5 98V904M577.5 98V904M625.5 98V904M673.5 98V904M721.5 98V904M769.5 98V904M817.5 98V904M865.5 98V904M913.5 98V904M961.5 98V904M1009.5 98V904M1057.5 98V904M1105.5 98V904M1153.5 98V904M1201.5 98V904M1249.5 98V904M1297.5 98V904M1345.5 98V904M1393.5 98V904M1441.5 98V904M1489.5 98V904M1537.5 98V904M1585.5 98V904M1633.5 98V904M1681.5 98V904M1729.5 98V904M1777.5 98V904M1825.5 98V904M1873.5 98V904M1921.5 98V904M1969.5 98V904M2017.5 98V904M2065.5 98V904M2113.5 98V904M2161.5 98V904M2209.5 98V904M2257.5 98V904M2305.5 98V904M2353.5 98V904M2401.5 98V904M2449.5 98V904M2497.5 98V904" stroke="#7a6a60" stroke-width="1" stroke-dasharray="3 3" fill="none"/>
<rect x="385" y="717" width="2112" height="1" fill="#8a96a6"/>
<rect x="1873" y="833" width="624" height="1" fill="#000"/>
<rect x="1844" y="833" width="29" height="1" fill="#fff"/>
</g>
<g clip-path="url(#cm)">
<polyline points="384.5,301.5 610.5,301.5 617.5,520.5 623.5,682.5 625.5,725.5 705.5,725.5 721.5,740.5 946.5,740.5 961.5,791.5 1025.5,791.5 1041.5,797.5 1137.5,797.5 1153.5,805.5 1526.5,805.5 1533.5,803.5 1554.5,803.5 1569.5,779.5 1618.5,779.5 1633.5,744.5 1651.5,744.5 1665.5,764.5 1825.5,764.5 1842.5,857.5 2210.5,857.5 2226.5,827.5 2432.5,827.5" fill="none" stroke="#ff0000" stroke-width="1" shape-rendering="crispEdges"/>
<polyline points="384.5,158.5 455.5,158.5 465.5,155.5 833.5,155.5 849.5,170.5 866.5,170.5 881.5,229.5 913.5,229.5 928.5,608.5 1139.5,608.5 1145.5,610.5 1169.5,610.5 1186.5,708.5 1249.5,708.5 1265.5,759.5 1297.5,759.5 1313.5,667.5 1345.5,667.5 1345.5,663.5 1507.5,663.5 1514.5,660.5 1553.5,660.5 1569.5,643.5 1681.5,643.5 1698.5,632.5 2066.5,632.5 2081.5,651.5 2113.5,651.5 2130.5,701.5 2226.5,701.5 2241.5,656.5 2273.5,655.5 2289.5,639.5 2432.5,639.5" fill="none" stroke="#0000ff" stroke-width="1" shape-rendering="crispEdges"/>
</g>
<g clip-path="url(#cm)" shape-rendering="crispEdges">
<rect x="384" y="202" width="2" height="56" fill="#00ff00"/>
<rect x="380" y="211" width="4" height="2" fill="#00ff00"/>
<rect x="386" y="208" width="4" height="2" fill="#00ff00"/>
<rect x="400" y="174" width="2" height="67" fill="#00ff00"/>
<rect x="396" y="209" width="4" height="2" fill="#00ff00"/>
<rect x="402" y="181" width="4" height="2" fill="#00ff00"/>
<rect x="416" y="152" width="2" height="54" fill="#00ff00"/>
<rect x="412" y="181" width="4" height="2" fill="#00ff00"/>
<rect x="418" y="161" width="4" height="2" fill="#00ff00"/>
<rect x="432" y="147" width="2" height="44" fill="#00ff00"/>
<rect x="428" y="162" width="4" height="2" fill="#00ff00"/>
<rect x="434" y="165" width="4" height="2" fill="#00ff00"/>
<rect x="448" y="144" width="2" height="30" fill="#00ff00"/>
<rect x="444" y="166" width="4" height="2" fill="#00ff00"/>
<rect x="450" y="155" width="4" height="2" fill="#00ff00"/>
<rect x="447" y="156" width="5" height="11" fill="#ffc0cb"/>
<rect x="464" y="143" width="2" height="124" fill="#00ff00"/>
<rect x="460" y="154" width="4" height="2" fill="#00ff00"/>
<rect x="466" y="214" width="4" height="2" fill="#00ff00"/>
<rect x="480" y="166" width="2" height="86" fill="#00ff00"/>
<rect x="476" y="215" width="4" height="2" fill="#00ff00"/>
<rect x="482" y="170" width="4" height="2" fill="#00ff00"/>
<rect x="479" y="171" width="5" height="45" fill="#808080"/>
<rect x="496" y="171" width="2" height="84" fill="#00ff00"/>
<rect x="492" y="171" width="4" height="2" fill="#00ff00"/>
<rect x="498" y="221" width="4" height="2" fill="#00ff00"/>
<rect x="495" y="172" width="5" height="50" fill="#f08080"/>
<rect x="512" y="150" width="2" height="135" fill="#00ff00"/>
<rect x="508" y="223" width="4" height="2" fill="#00ff00"/>
<rect x="514" y="243" width="4" height="2" fill="#00ff00"/>
<rect x="511" y="224" width="5" height="20" fill="#1e90ff"/>
<rect x="528" y="200" width="2" height="53" fill="#00ff00"/>
<rect x="524" y="241" width="4" height="2" fill="#00ff00"/>
<rect x="530" y="229" width="4" height="2" fill="#00ff00"/>
<rect x="527" y="230" width="5" height="12" fill="#1e90ff"/>
<rect x="544" y="227" width="2" height="292" fill="#00ff00"/>
<rect x="540" y="227" width="4" height="2" fill="#00ff00"/>
<rect x="546" y="485" width="4" height="2" fill="#00ff00"/>
<rect x="543" y="228" width="5" height="258" fill="#00ffff"/>
<rect x="560" y="487" width="2" height="183" fill="#00ff00"/>
<rect x="556" y="486" width="4" height="2" fill="#00ff00"/>
<rect x="562" y="559" width="4" height="2" fill="#00ff00"/>
<rect x="559" y="487" width="5" height="73" fill="#0000ff"/>
<rect x="576" y="508" width="2" height="97" fill="#00ff00"/>
<rect x="572" y="559" width="4" height="2" fill="#00ff00"/>
<rect x="578" y="596" width="4" height="2" fill="#00ff00"/>
<rect x="575" y="560" width="5" height="37" fill="#1e90ff"/>
<rect x="592" y="595" width="2" height="226" fill="#00ff00"/>
<rect x="588" y="597" width="4" height="2" fill="#00ff00"/>
<rect x="594" y="717" width="4" height="2" fill="#00ff00"/>
<rect x="608" y="680" width="2" height="107" fill="#00ff00"/>
<rect x="604" y="718" width="4" height="2" fill="#00ff00"/>
<rect x="610" y="724" width="4" height="2" fill="#00ff00"/>
<rect x="607" y="719" width="5" height="6" fill="#0000ff"/>
<rect x="624" y="685" width="2" height="67" fill="#00ff00"/>
<rect x="620" y="724" width="4" height="2" fill="#00ff00"/>
<rect x="626" y="690" width="4" height="2" fill="#00ff00"/>
<rect x="640" y="636" width="2" height="82" fill="#00ff00"/>
<rect x="636" y="688" width="4" height="2" fill="#00ff00"/>
<rect x="642" y="639" width="4" height="2" fill="#00ff00"/>
<rect x="656" y="622" width="2" height="77" fill="#00ff00"/>
<rect x="652" y="640" width="4" height="2" fill="#00ff00"/>
<rect x="658" y="651" width="4" height="2" fill="#00ff00"/>
<rect x="655" y="641" width="5" height="11" fill="#b22222"/>
<rect x="672" y="644" width="2" height="56" fill="#00ff00"/>
<rect x="668" y="651" width="4" height="2" fill="#00ff00"/>
<rect x="674" y="688" width="4" height="2" fill="#00ff00"/>
<rect x="671" y="652" width="5" height="37" fill="#ffe4b5"/>
<rect x="688" y="664" width="2" height="44" fill="#00ff00"/>
<rect x="684" y="690" width="4" height="2" fill="#00ff00"/>
<rect x="690" y="698" width="4" height="2" fill="#00ff00"/>
<rect x="704" y="688" width="2" height="76" fill="#00ff00"/>
<rect x="700" y="701" width="4" height="2" fill="#00ff00"/>
<rect x="706" y="739" width="4" height="2" fill="#00ff00"/>
<rect x="720" y="636" width="2" height="105" fill="#00ff00"/>
<rect x="716" y="738" width="4" height="2" fill="#00ff00"/>
<rect x="722" y="647" width="4" height="2" fill="#00ff00"/>
<rect x="736" y="610" width="2" height="40" fill="#00ff00"/>
<rect x="732" y="644" width="4" height="2" fill="#00ff00"/>
<rect x="738" y="619" width="4" height="2" fill="#00ff00"/>
<rect x="735" y="620" width="5" height="25" fill="#ffc0cb"/>
<rect x="752" y="580" width="2" height="54" fill="#00ff00"/>
<rect x="748" y="619" width="4" height="2" fill="#00ff00"/>
<rect x="754" y="607" width="4" height="2" fill="#00ff00"/>
<rect x="751" y="608" width="5" height="12" fill="#ffc0cb"/>
<rect x="768" y="605" width="2" height="39" fill="#00ff00"/>
<rect x="764" y="608" width="4" height="2" fill="#00ff00"/>
<rect x="770" y="637" width="4" height="2" fill="#00ff00"/>
<rect x="784" y="585" width="2" height="55" fill="#00ff00"/>
<rect x="780" y="638" width="4" height="2" fill="#00ff00"/>
<rect x="786" y="610" width="4" height="2" fill="#00ff00"/>
<rect x="800" y="598" width="2" height="75" fill="#00ff00"/>
<rect x="796" y="609" width="4" height="2" fill="#00ff00"/>
<rect x="802" y="655" width="4" height="2" fill="#00ff00"/>
<rect x="816" y="637" width="2" height="31" fill="#00ff00"/>
<rect x="812" y="657" width="4" height="2" fill="#00ff00"/>
<rect x="818" y="660" width="4" height="2" fill="#00ff00"/>
<rect x="832" y="652" width="2" height="51" fill="#00ff00"/>
<rect x="828" y="662" width="4" height="2" fill="#00ff00"/>
<rect x="834" y="694" width="4" height="2" fill="#00ff00"/>
<rect x="848" y="677" width="2" height="44" fill="#00ff00"/>
<rect x="844" y="696" width="4" height="2" fill="#00ff00"/>
<rect x="850" y="708" width="4" height="2" fill="#00ff00"/>
<rect x="864" y="693" width="2" height="32" fill="#00ff00"/>
<rect x="860" y="707" width="4" height="2" fill="#00ff00"/>
<rect x="866" y="707" width="4" height="2" fill="#00ff00"/>
<rect x="860" y="707" width="10" height="2" fill="#ff8c00"/>
<rect x="880" y="706" width="2" height="31" fill="#00ff00"/>
<rect x="876" y="708" width="4" height="2" fill="#00ff00"/>
<rect x="882" y="727" width="4" height="2" fill="#00ff00"/>
<rect x="896" y="720" width="2" height="34" fill="#00ff00"/>
<rect x="892" y="729" width="4" height="2" fill="#00ff00"/>
<rect x="898" y="752" width="4" height="2" fill="#00ff00"/>
<rect x="912" y="753" width="2" height="25" fill="#00ff00"/>
<rect x="908" y="754" width="4" height="2" fill="#00ff00"/>
<rect x="914" y="757" width="4" height="2" fill="#00ff00"/>
<rect x="928" y="759" width="2" height="37" fill="#00ff00"/>
<rect x="924" y="759" width="4" height="2" fill="#00ff00"/>
<rect x="930" y="791" width="4" height="2" fill="#00ff00"/>
<rect x="944" y="776" width="2" height="45" fill="#00ff00"/>
<rect x="940" y="790" width="4" height="2" fill="#00ff00"/>
<rect x="946" y="790" width="4" height="2" fill="#00ff00"/>
<rect x="960" y="767" width="2" height="30" fill="#00ff00"/>
<rect x="956" y="788" width="4" height="2" fill="#00ff00"/>
<rect x="962" y="779" width="4" height="2" fill="#00ff00"/>
<rect x="959" y="780" width="5" height="9" fill="#ffc0cb"/>
<rect x="976" y="756" width="2" height="34" fill="#00ff00"/>
<rect x="972" y="779" width="4" height="2" fill="#00ff00"/>
<rect x="978" y="779" width="4" height="2" fill="#00ff00"/>
<rect x="973" y="779" width="8" height="2" fill="#b22222"/>
<rect x="992" y="750" width="2" height="38" fill="#00ff00"/>
<rect x="988" y="780" width="4" height="2" fill="#00ff00"/>
<rect x="994" y="772" width="4" height="2" fill="#00ff00"/>
<rect x="1008" y="764" width="2" height="15" fill="#00ff00"/>
<rect x="1004" y="769" width="4" height="2" fill="#00ff00"/>
<rect x="1010" y="769" width="4" height="2" fill="#00ff00"/>
<rect x="1004" y="769" width="10" height="2" fill="#ff8c00"/>
<rect x="1024" y="762" width="2" height="39" fill="#00ff00"/>
<rect x="1020" y="770" width="4" height="2" fill="#00ff00"/>
<rect x="1026" y="795" width="4" height="2" fill="#00ff00"/>
<rect x="1040" y="718" width="2" height="81" fill="#00ff00"/>
<rect x="1036" y="796" width="4" height="2" fill="#00ff00"/>
<rect x="1042" y="733" width="4" height="2" fill="#00ff00"/>
<rect x="1039" y="734" width="5" height="63" fill="#808080"/>
<rect x="1056" y="780" width="2" height="41" fill="#00ff00"/>
<rect x="1052" y="808" width="4" height="2" fill="#00ff00"/>
<rect x="1058" y="792" width="4" height="2" fill="#00ff00"/>
<rect x="1072" y="763" width="2" height="33" fill="#00ff00"/>
<rect x="1068" y="794" width="4" height="2" fill="#00ff00"/>
<rect x="1074" y="794" width="4" height="2" fill="#00ff00"/>
<rect x="1088" y="778" width="2" height="18" fill="#00ff00"/>
<rect x="1084" y="793" width="4" height="2" fill="#00ff00"/>
<rect x="1090" y="784" width="4" height="2" fill="#00ff00"/>
<rect x="1087" y="785" width="5" height="9" fill="#ffc0cb"/>
<rect x="1104" y="759" width="2" height="32" fill="#00ff00"/>
<rect x="1100" y="782" width="4" height="2" fill="#00ff00"/>
<rect x="1106" y="758" width="4" height="2" fill="#00ff00"/>
<rect x="1120" y="731" width="2" height="48" fill="#00ff00"/>
<rect x="1116" y="759" width="4" height="2" fill="#00ff00"/>
<rect x="1122" y="770" width="4" height="2" fill="#00ff00"/>
<rect x="1119" y="760" width="5" height="11" fill="#ff0000"/>
<rect x="1136" y="770" width="2" height="37" fill="#00ff00"/>
<rect x="1132" y="772" width="4" height="2" fill="#00ff00"/>
<rect x="1138" y="804" width="4" height="2" fill="#00ff00"/>
<rect x="1152" y="781" width="2" height="28" fill="#00ff00"/>
<rect x="1148" y="804" width="4" height="2" fill="#00ff00"/>
<rect x="1154" y="798" width="4" height="2" fill="#00ff00"/>
<rect x="1168" y="793" width="2" height="16" fill="#00ff00"/>
<rect x="1164" y="799" width="4" height="2" fill="#00ff00"/>
<rect x="1170" y="802" width="4" height="2" fill="#00ff00"/>
<rect x="1184" y="758" width="2" height="49" fill="#00ff00"/>
<rect x="1180" y="803" width="4" height="2" fill="#00ff00"/>
<rect x="1186" y="789" width="4" height="2" fill="#00ff00"/>
<rect x="1183" y="790" width="5" height="14" fill="#ff0000"/>
<rect x="1200" y="768" width="2" height="28" fill="#00ff00"/>
<rect x="1196" y="788" width="4" height="2" fill="#00ff00"/>
<rect x="1202" y="767" width="4" height="2" fill="#00ff00"/>
<rect x="1216" y="749" width="2" height="22" fill="#00ff00"/>
<rect x="1212" y="766" width="4" height="2" fill="#00ff00"/>
<rect x="1218" y="766" width="4" height="2" fill="#00ff00"/>
<rect x="1232" y="753" width="2" height="33" fill="#00ff00"/>
<rect x="1228" y="765" width="4" height="2" fill="#00ff00"/>
<rect x="1234" y="777" width="4" height="2" fill="#00ff00"/>
<rect x="1248" y="733" width="2" height="48" fill="#00ff00"/>
<rect x="1244" y="778" width="4" height="2" fill="#00ff00"/>
<rect x="1250" y="759" width="4" height="2" fill="#00ff00"/>
<rect x="1247" y="760" width="5" height="19" fill="#1e90ff"/>
<rect x="1264" y="718" width="2" height="54" fill="#00ff00"/>
<rect x="1260" y="759" width="4" height="2" fill="#00ff00"/>
<rect x="1266" y="718" width="4" height="2" fill="#00ff00"/>
<rect x="1280" y="674" width="2" height="54" fill="#00ff00"/>
<rect x="1276" y="719" width="4" height="2" fill="#00ff00"/>
<rect x="1282" y="674" width="4" height="2" fill="#00ff00"/>
<rect x="1279" y="675" width="5" height="45" fill="#32cd32"/>
<rect x="1296" y="654" width="2" height="54" fill="#00ff00"/>
<rect x="1292" y="674" width="4" height="2" fill="#00ff00"/>
<rect x="1298" y="666" width="4" height="2" fill="#00ff00"/>
<rect x="1295" y="667" width="5" height="8" fill="#b22222"/>
<rect x="1312" y="656" width="2" height="43" fill="#00ff00"/>
<rect x="1308" y="666" width="4" height="2" fill="#00ff00"/>
<rect x="1314" y="673" width="4" height="2" fill="#00ff00"/>
<rect x="1311" y="667" width="5" height="7" fill="#b22222"/>
<rect x="1328" y="651" width="2" height="24" fill="#00ff00"/>
<rect x="1324" y="672" width="4" height="2" fill="#00ff00"/>
<rect x="1330" y="662" width="4" height="2" fill="#00ff00"/>
<rect x="1344" y="659" width="2" height="31" fill="#00ff00"/>
<rect x="1340" y="664" width="4" height="2" fill="#00ff00"/>
<rect x="1346" y="686" width="4" height="2" fill="#00ff00"/>
<rect x="1360" y="688" width="2" height="59" fill="#00ff00"/>
<rect x="1356" y="688" width="4" height="2" fill="#00ff00"/>
<rect x="1362" y="743" width="4" height="2" fill="#00ff00"/>
<rect x="1359" y="689" width="5" height="55" fill="#ff00ff"/>
<rect x="1376" y="699" width="2" height="51" fill="#00ff00"/>
<rect x="1372" y="744" width="4" height="2" fill="#00ff00"/>
<rect x="1378" y="717" width="4" height="2" fill="#00ff00"/>
<rect x="1375" y="718" width="5" height="27" fill="#3cb371"/>
<rect x="1392" y="703" width="2" height="40" fill="#00ff00"/>
<rect x="1388" y="717" width="4" height="2" fill="#00ff00"/>
<rect x="1394" y="739" width="4" height="2" fill="#00ff00"/>
<rect x="1391" y="718" width="5" height="22" fill="#d3d3d3"/>
<rect x="1408" y="731" width="2" height="21" fill="#00ff00"/>
<rect x="1404" y="738" width="4" height="2" fill="#00ff00"/>
<rect x="1410" y="738" width="4" height="2" fill="#00ff00"/>
<rect x="1424" y="728" width="2" height="14" fill="#00ff00"/>
<rect x="1420" y="737" width="4" height="2" fill="#00ff00"/>
<rect x="1426" y="730" width="4" height="2" fill="#00ff00"/>
<rect x="1423" y="731" width="5" height="7" fill="#ffc0cb"/>
<rect x="1440" y="703" width="2" height="28" fill="#00ff00"/>
<rect x="1436" y="728" width="4" height="2" fill="#00ff00"/>
<rect x="1442" y="706" width="4" height="2" fill="#00ff00"/>
<rect x="1456" y="672" width="2" height="35" fill="#00ff00"/>
<rect x="1452" y="704" width="4" height="2" fill="#00ff00"/>
<rect x="1458" y="674" width="4" height="2" fill="#00ff00"/>
<rect x="1472" y="675" width="2" height="30" fill="#00ff00"/>
<rect x="1468" y="675" width="4" height="2" fill="#00ff00"/>
<rect x="1474" y="696" width="4" height="2" fill="#00ff00"/>
<rect x="1471" y="676" width="5" height="21" fill="#d3d3d3"/>
<rect x="1488" y="664" width="2" height="41" fill="#00ff00"/>
<rect x="1484" y="697" width="4" height="2" fill="#00ff00"/>
<rect x="1490" y="664" width="4" height="2" fill="#00ff00"/>
<rect x="1487" y="665" width="5" height="33" fill="#808080"/>
<rect x="1504" y="649" width="2" height="27" fill="#00ff00"/>
<rect x="1500" y="663" width="4" height="2" fill="#00ff00"/>
<rect x="1506" y="661" width="4" height="2" fill="#00ff00"/>
<rect x="1520" y="655" width="2" height="18" fill="#00ff00"/>
<rect x="1516" y="659" width="4" height="2" fill="#00ff00"/>
<rect x="1522" y="663" width="4" height="2" fill="#00ff00"/>
<rect x="1519" y="660" width="5" height="4" fill="#ffe4b5"/>
<rect x="1536" y="642" width="2" height="35" fill="#00ff00"/>
<rect x="1532" y="662" width="4" height="2" fill="#00ff00"/>
<rect x="1538" y="646" width="4" height="2" fill="#00ff00"/>
<rect x="1552" y="619" width="2" height="27" fill="#00ff00"/>
<rect x="1548" y="644" width="4" height="2" fill="#00ff00"/>
<rect x="1554" y="643" width="4" height="2" fill="#00ff00"/>
<rect x="1549" y="643" width="8" height="2" fill="#b22222"/>
<rect x="1568" y="629" width="2" height="40" fill="#00ff00"/>
<rect x="1564" y="642" width="4" height="2" fill="#00ff00"/>
<rect x="1570" y="662" width="4" height="2" fill="#00ff00"/>
<rect x="1584" y="657" width="2" height="42" fill="#00ff00"/>
<rect x="1580" y="664" width="4" height="2" fill="#00ff00"/>
<rect x="1586" y="673" width="4" height="2" fill="#00ff00"/>
<rect x="1583" y="665" width="5" height="9" fill="#0000ff"/>
<rect x="1600" y="676" width="2" height="49" fill="#00ff00"/>
<rect x="1596" y="675" width="4" height="2" fill="#00ff00"/>
<rect x="1602" y="720" width="4" height="2" fill="#00ff00"/>
<rect x="1599" y="676" width="5" height="45" fill="#ff00ff"/>
<rect x="1616" y="670" width="2" height="57" fill="#00ff00"/>
<rect x="1612" y="718" width="4" height="2" fill="#00ff00"/>
<rect x="1618" y="679" width="4" height="2" fill="#00ff00"/>
<rect x="1615" y="680" width="5" height="39" fill="#808080"/>
<rect x="1632" y="648" width="2" height="76" fill="#00ff00"/>
<rect x="1628" y="678" width="4" height="2" fill="#00ff00"/>
<rect x="1634" y="717" width="4" height="2" fill="#00ff00"/>
<rect x="1648" y="718" width="2" height="134" fill="#00ff00"/>
<rect x="1644" y="718" width="4" height="2" fill="#00ff00"/>
<rect x="1650" y="762" width="4" height="2" fill="#00ff00"/>
<rect x="1647" y="719" width="5" height="44" fill="#00ffff"/>
<rect x="1664" y="731" width="2" height="47" fill="#00ff00"/>
<rect x="1660" y="764" width="4" height="2" fill="#00ff00"/>
<rect x="1666" y="731" width="4" height="2" fill="#00ff00"/>
<rect x="1680" y="624" width="2" height="109" fill="#00ff00"/>
<rect x="1676" y="730" width="4" height="2" fill="#00ff00"/>
<rect x="1682" y="632" width="4" height="2" fill="#00ff00"/>
<rect x="1696" y="614" width="2" height="52" fill="#00ff00"/>
<rect x="1692" y="634" width="4" height="2" fill="#00ff00"/>
<rect x="1698" y="663" width="4" height="2" fill="#00ff00"/>
<rect x="1712" y="664" width="2" height="96" fill="#00ff00"/>
<rect x="1708" y="663" width="4" height="2" fill="#00ff00"/>
<rect x="1714" y="696" width="4" height="2" fill="#00ff00"/>
<rect x="1711" y="664" width="5" height="33" fill="#0000ff"/>
<rect x="1728" y="643" width="2" height="101" fill="#00ff00"/>
<rect x="1724" y="695" width="4" height="2" fill="#00ff00"/>
<rect x="1730" y="651" width="4" height="2" fill="#00ff00"/>
<rect x="1727" y="652" width="5" height="44" fill="#808080"/>
<rect x="1744" y="643" width="2" height="44" fill="#00ff00"/>
<rect x="1740" y="650" width="4" height="2" fill="#00ff00"/>
<rect x="1746" y="671" width="4" height="2" fill="#00ff00"/>
<rect x="1743" y="651" width="5" height="21" fill="#f08080"/>
<rect x="1760" y="633" width="2" height="106" fill="#00ff00"/>
<rect x="1756" y="671" width="4" height="2" fill="#00ff00"/>
<rect x="1762" y="701" width="4" height="2" fill="#00ff00"/>
<rect x="1776" y="676" width="2" height="51" fill="#00ff00"/>
<rect x="1772" y="701" width="4" height="2" fill="#00ff00"/>
<rect x="1778" y="701" width="4" height="2" fill="#00ff00"/>
<rect x="1792" y="689" width="2" height="51" fill="#00ff00"/>
<rect x="1788" y="701" width="4" height="2" fill="#00ff00"/>
<rect x="1794" y="725" width="4" height="2" fill="#00ff00"/>
<rect x="1808" y="726" width="2" height="71" fill="#00ff00"/>
<rect x="1804" y="726" width="4" height="2" fill="#00ff00"/>
<rect x="1810" y="782" width="4" height="2" fill="#00ff00"/>
<rect x="1824" y="773" width="2" height="113" fill="#00ff00"/>
<rect x="1820" y="782" width="4" height="2" fill="#00ff00"/>
<rect x="1826" y="856" width="4" height="2" fill="#00ff00"/>
<rect x="1840" y="816" width="2" height="54" fill="#00ff00"/>
<rect x="1836" y="857" width="4" height="2" fill="#00ff00"/>
<rect x="1842" y="816" width="4" height="2" fill="#00ff00"/>
<rect x="1839" y="817" width="5" height="41" fill="#808080"/>
<rect x="1856" y="803" width="2" height="52" fill="#00ff00"/>
<rect x="1852" y="816" width="4" height="2" fill="#00ff00"/>
<rect x="1858" y="803" width="4" height="2" fill="#00ff00"/>
<rect x="1855" y="804" width="5" height="13" fill="#b22222"/>
<rect x="1872" y="755" width="2" height="51" fill="#00ff00"/>
<rect x="1868" y="803" width="4" height="2" fill="#00ff00"/>
<rect x="1874" y="788" width="4" height="2" fill="#00ff00"/>
<rect x="1871" y="789" width="5" height="15" fill="#ff0000"/>
<rect x="1888" y="770" width="2" height="96" fill="#00ff00"/>
<rect x="1884" y="787" width="4" height="2" fill="#00ff00"/>
<rect x="1890" y="805" width="4" height="2" fill="#00ff00"/>
<rect x="1887" y="788" width="5" height="18" fill="#b22222"/>
<rect x="1904" y="749" width="2" height="71" fill="#00ff00"/>
<rect x="1900" y="805" width="4" height="2" fill="#00ff00"/>
<rect x="1906" y="766" width="4" height="2" fill="#00ff00"/>
<rect x="1920" y="687" width="2" height="83" fill="#00ff00"/>
<rect x="1916" y="767" width="4" height="2" fill="#00ff00"/>
<rect x="1922" y="701" width="4" height="2" fill="#00ff00"/>
<rect x="1936" y="693" width="2" height="164" fill="#00ff00"/>
<rect x="1932" y="700" width="4" height="2" fill="#00ff00"/>
<rect x="1938" y="713" width="4" height="2" fill="#00ff00"/>
<rect x="1935" y="701" width="5" height="13" fill="#b22222"/>
<rect x="1952" y="706" width="2" height="54" fill="#00ff00"/>
<rect x="1948" y="715" width="4" height="2" fill="#00ff00"/>
<rect x="1954" y="748" width="4" height="2" fill="#00ff00"/>
<rect x="1968" y="746" width="2" height="58" fill="#00ff00"/>
<rect x="1964" y="748" width="4" height="2" fill="#00ff00"/>
<rect x="1970" y="768" width="4" height="2" fill="#00ff00"/>
<rect x="1967" y="749" width="5" height="20" fill="#0000ff"/>
<rect x="1984" y="759" width="2" height="85" fill="#00ff00"/>
<rect x="1980" y="770" width="4" height="2" fill="#00ff00"/>
<rect x="1986" y="825" width="4" height="2" fill="#00ff00"/>
<rect x="2000" y="730" width="2" height="102" fill="#00ff00"/>
<rect x="1996" y="826" width="4" height="2" fill="#00ff00"/>
<rect x="2002" y="733" width="4" height="2" fill="#00ff00"/>
<rect x="1999" y="734" width="5" height="93" fill="#808080"/>
<rect x="2016" y="715" width="2" height="58" fill="#00ff00"/>
<rect x="2012" y="734" width="4" height="2" fill="#00ff00"/>
<rect x="2018" y="741" width="4" height="2" fill="#00ff00"/>
<rect x="2015" y="735" width="5" height="7" fill="#b22222"/>
<rect x="2032" y="737" width="2" height="71" fill="#00ff00"/>
<rect x="2028" y="740" width="4" height="2" fill="#00ff00"/>
<rect x="2034" y="780" width="4" height="2" fill="#00ff00"/>
<rect x="2048" y="759" width="2" height="69" fill="#00ff00"/>
<rect x="2044" y="782" width="4" height="2" fill="#00ff00"/>
<rect x="2050" y="826" width="4" height="2" fill="#00ff00"/>
<rect x="2064" y="779" width="2" height="56" fill="#00ff00"/>
<rect x="2060" y="825" width="4" height="2" fill="#00ff00"/>
<rect x="2066" y="807" width="4" height="2" fill="#00ff00"/>
<rect x="2063" y="808" width="5" height="18" fill="#3cb371"/>
<rect x="2080" y="795" width="2" height="34" fill="#00ff00"/>
<rect x="2076" y="807" width="4" height="2" fill="#00ff00"/>
<rect x="2082" y="807" width="4" height="2" fill="#00ff00"/>
<rect x="2096" y="770" width="2" height="89" fill="#00ff00"/>
<rect x="2092" y="807" width="4" height="2" fill="#00ff00"/>
<rect x="2098" y="824" width="4" height="2" fill="#00ff00"/>
<rect x="2112" y="757" width="2" height="71" fill="#00ff00"/>
<rect x="2108" y="825" width="4" height="2" fill="#00ff00"/>
<rect x="2114" y="782" width="4" height="2" fill="#00ff00"/>
<rect x="2111" y="783" width="5" height="43" fill="#3cb371"/>
<rect x="2128" y="734" width="2" height="83" fill="#00ff00"/>
<rect x="2124" y="782" width="4" height="2" fill="#00ff00"/>
<rect x="2130" y="753" width="4" height="2" fill="#00ff00"/>
<rect x="2144" y="695" width="2" height="81" fill="#00ff00"/>
<rect x="2140" y="754" width="4" height="2" fill="#00ff00"/>
<rect x="2146" y="738" width="4" height="2" fill="#00ff00"/>
<rect x="2143" y="739" width="5" height="16" fill="#ff0000"/>
<rect x="2160" y="717" width="2" height="57" fill="#00ff00"/>
<rect x="2156" y="738" width="4" height="2" fill="#00ff00"/>
<rect x="2162" y="763" width="4" height="2" fill="#00ff00"/>
<rect x="2176" y="722" width="2" height="60" fill="#00ff00"/>
<rect x="2172" y="765" width="4" height="2" fill="#00ff00"/>
<rect x="2178" y="731" width="4" height="2" fill="#00ff00"/>
<rect x="2192" y="627" width="2" height="122" fill="#00ff00"/>
<rect x="2188" y="730" width="4" height="2" fill="#00ff00"/>
<rect x="2194" y="739" width="4" height="2" fill="#00ff00"/>
<rect x="2191" y="731" width="5" height="9" fill="#ff0000"/>
<rect x="2208" y="702" width="2" height="76" fill="#00ff00"/>
<rect x="2204" y="740" width="4" height="2" fill="#00ff00"/>
<rect x="2210" y="713" width="4" height="2" fill="#00ff00"/>
<rect x="2224" y="645" width="2" height="76" fill="#00ff00"/>
<rect x="2220" y="711" width="4" height="2" fill="#00ff00"/>
<rect x="2226" y="655" width="4" height="2" fill="#00ff00"/>
<rect x="2240" y="650" width="2" height="54" fill="#00ff00"/>
<rect x="2236" y="655" width="4" height="2" fill="#00ff00"/>
<rect x="2242" y="655" width="4" height="2" fill="#00ff00"/>
<rect x="2237" y="655" width="8" height="2" fill="#b22222"/>
<rect x="2256" y="635" width="2" height="56" fill="#00ff00"/>
<rect x="2252" y="657" width="4" height="2" fill="#00ff00"/>
<rect x="2258" y="638" width="4" height="2" fill="#00ff00"/>
<rect x="2272" y="636" width="2" height="50" fill="#00ff00"/>
<rect x="2268" y="638" width="4" height="2" fill="#00ff00"/>
<rect x="2274" y="638" width="4" height="2" fill="#00ff00"/>
<rect x="2268" y="638" width="10" height="2" fill="#ff8c00"/>
<rect x="2288" y="634" width="2" height="28" fill="#00ff00"/>
<rect x="2284" y="639" width="4" height="2" fill="#00ff00"/>
<rect x="2290" y="658" width="4" height="2" fill="#00ff00"/>
<rect x="2287" y="640" width="5" height="19" fill="#ffe4b5"/>
<rect x="2304" y="650" width="2" height="37" fill="#00ff00"/>
<rect x="2300" y="660" width="4" height="2" fill="#00ff00"/>
<rect x="2306" y="670" width="4" height="2" fill="#00ff00"/>
<rect x="2320" y="632" width="2" height="38" fill="#00ff00"/>
<rect x="2316" y="667" width="4" height="2" fill="#00ff00"/>
<rect x="2322" y="658" width="4" height="2" fill="#00ff00"/>
<rect x="2336" y="657" width="2" height="43" fill="#00ff00"/>
<rect x="2332" y="659" width="4" height="2" fill="#00ff00"/>
<rect x="2338" y="685" width="4" height="2" fill="#00ff00"/>
<rect x="2352" y="669" width="2" height="35" fill="#00ff00"/>
<rect x="2348" y="685" width="4" height="2" fill="#00ff00"/>
<rect x="2354" y="702" width="4" height="2" fill="#00ff00"/>
<rect x="2368" y="697" width="2" height="22" fill="#00ff00"/>
<rect x="2364" y="702" width="4" height="2" fill="#00ff00"/>
<rect x="2370" y="707" width="4" height="2" fill="#00ff00"/>
<rect x="2367" y="703" width="5" height="5" fill="#ffe4b5"/>
<rect x="2384" y="709" width="2" height="29" fill="#00ff00"/>
<rect x="2380" y="709" width="4" height="2" fill="#00ff00"/>
<rect x="2386" y="720" width="4" height="2" fill="#00ff00"/>
<rect x="2400" y="711" width="2" height="45" fill="#00ff00"/>
<rect x="2396" y="719" width="4" height="2" fill="#00ff00"/>
<rect x="2402" y="734" width="4" height="2" fill="#00ff00"/>
<rect x="2416" y="718" width="2" height="29" fill="#00ff00"/>
<rect x="2412" y="734" width="4" height="2" fill="#00ff00"/>
<rect x="2418" y="736" width="4" height="2" fill="#00ff00"/>
<rect x="2432" y="723" width="2" height="29" fill="#00ff00"/>
<rect x="2428" y="736" width="4" height="2" fill="#00ff00"/>
<rect x="2434" y="731" width="4" height="2" fill="#00ff00"/>
<rect x="2431" y="732" width="5" height="5" fill="#ff8c00"/>
<rect x="2448" y="716" width="2" height="23" fill="#00ff00"/>
<rect x="2444" y="732" width="4" height="2" fill="#00ff00"/>
<rect x="2450" y="717" width="4" height="2" fill="#00ff00"/>
<rect x="606" y="717" width="6" height="6" fill="#0000ff"/>
<rect x="638" y="773" width="6" height="6" fill="#0000ff"/>
<rect x="1437" y="786" width="6" height="6" fill="#0000ff"/>
<rect x="1629" y="779" width="6" height="6" fill="#0000ff"/>
<rect x="1326" y="613" width="6" height="6" fill="#ff0000"/>
<rect x="1358" y="651" width="6" height="6" fill="#ff0000"/>
<rect x="782" y="522" width="6" height="6" fill="#ffc0cb"/>
<rect x="1358" y="625" width="6" height="6" fill="#ffc0cb"/>
<rect x="1710" y="601" width="6" height="6" fill="#ffc0cb"/>
</g>
<g clip-path="url(#cm)">
<use href="#flw" x="560.5" y="355.9"/>
<use href="#flw" x="576.6" y="377.1"/>
<use href="#flw" x="608.6" y="549.0"/>
<use href="#flw" x="656.5" y="491.2"/>
<use href="#flw" x="672.4" y="513.1"/>
<use href="#flw" x="736.7" y="479.5"/>
<use href="#flw" x="752.6" y="449.2"/>
<use href="#flw" x="864.6" y="562.2"/>
<use href="#flw" x="960.7" y="636.3"/>
<use href="#flw" x="976.6" y="625.2"/>
<use href="#flw" x="1008.6" y="634.2"/>
<use href="#flw" x="1040.6" y="588.2"/>
<use href="#flw" x="1088.2" y="647.4"/>
<use href="#flw" x="1120.3" y="599.8"/>
<use href="#flw" x="1184.7" y="628.3"/>
<use href="#flw" x="1248.6" y="603.3"/>
<use href="#flw" x="1280.7" y="543.4"/>
<use href="#flw" x="1296.5" y="523.3"/>
<use href="#flw" x="1312.5" y="526.3"/>
<use href="#flw" x="1360.6" y="558.2"/>
<use href="#flw" x="1376.4" y="569.7"/>
<use href="#flw" x="1392.7" y="572.2"/>
<use href="#flw" x="1424.8" y="597.3"/>
<use href="#flw" x="1472.4" y="545.1"/>
<use href="#flw" x="1488.4" y="533.3"/>
<use href="#flw" x="1520.5" y="524.2"/>
<use href="#flw" x="1552.6" y="488.4"/>
<use href="#flw" x="1584.5" y="527.2"/>
<use href="#flw" x="1600.5" y="543.3"/>
<use href="#flw" x="1616.6" y="539.5"/>
<use href="#flw" x="1648.6" y="587.3"/>
<use href="#flw" x="1712.7" y="533.5"/>
<use href="#flw" x="1728.5" y="512.4"/>
<use href="#flw" x="1744.6" y="512.4"/>
<use href="#flw" x="1840.5" y="685.4"/>
<use href="#flw" x="1856.5" y="673.2"/>
<use href="#flw" x="1872.7" y="624.4"/>
<use href="#flw" x="1888.4" y="637.3"/>
<use href="#flw" x="1936.7" y="563.5"/>
<use href="#flw" x="1968.7" y="615.4"/>
<use href="#flw" x="2000.7" y="599.5"/>
<use href="#flw" x="2016.7" y="584.6"/>
<use href="#flw" x="2064.5" y="648.5"/>
<use href="#flw" x="2112.6" y="626.2"/>
<use href="#flw" x="2144.6" y="564.3"/>
<use href="#flw" x="2192.5" y="496.2"/>
<use href="#flw" x="2240.8" y="520.5"/>
<use href="#flw" x="2272.7" y="505.4"/>
<use href="#flw" x="2288.6" y="503.5"/>
<use href="#flw" x="2368.5" y="566.4"/>
<use href="#flw" x="2432.5" y="592.5"/>
<use href="#cir" x="592.6" y="422.2"/>
<use href="#cir" x="624.5" y="511.8"/>
<use href="#cir" x="640.4" y="463.5"/>
<use href="#cir" x="688.3" y="491.2"/>
<use href="#cir" x="704.4" y="515.1"/>
<use href="#cir" x="720.4" y="463.3"/>
<use href="#cir" x="768.5" y="432.5"/>
<use href="#cir" x="784.5" y="412.4"/>
<use href="#cir" x="800.4" y="425.4"/>
<use href="#cir" x="816.7" y="464.1"/>
<use href="#cir" x="832.6" y="479.5"/>
<use href="#cir" x="848.3" y="504.2"/>
<use href="#cir" x="880.5" y="533.1"/>
<use href="#cir" x="896.6" y="547.3"/>
<use href="#cir" x="912.5" y="580.1"/>
<use href="#cir" x="928.4" y="585.2"/>
<use href="#cir" x="944.6" y="604.0"/>
<use href="#cir" x="992.2" y="578.5"/>
<use href="#cir" x="1024.3" y="589.2"/>
<use href="#cir" x="1056.4" y="607.3"/>
<use href="#cir" x="1072.7" y="591.3"/>
<use href="#cir" x="1104.8" y="585.2"/>
<use href="#cir" x="1136.6" y="596.5"/>
<use href="#cir" x="1152.4" y="607.8"/>
<use href="#cir" x="1168.4" y="620.3"/>
<use href="#cir" x="1200.5" y="595.3"/>
<use href="#cir" x="1216.5" y="576.5"/>
<use href="#cir" x="1232.6" y="580.2"/>
<use href="#cir" x="1264.4" y="546.4"/>
<use href="#cir" x="1408.2" y="558.9"/>
<use href="#cir" x="1440.3" y="530.1"/>
<use href="#cir" x="1456.6" y="500.0"/>
<use href="#cir" x="1504.3" y="476.4"/>
<use href="#cir" x="1536.4" y="470.6"/>
<use href="#cir" x="1568.4" y="456.5"/>
<use href="#cir" x="1632.4" y="476.4"/>
<use href="#cir" x="1664.5" y="558.3"/>
<use href="#cir" x="1680.5" y="450.5"/>
<use href="#cir" x="1696.4" y="441.4"/>
<use href="#cir" x="1760.5" y="459.4"/>
<use href="#cir" x="1776.7" y="503.5"/>
<use href="#cir" x="1792.6" y="515.7"/>
<use href="#cir" x="1808.3" y="553.4"/>
<use href="#cir" x="1824.7" y="600.0"/>
<use href="#cir" x="1904.2" y="576.5"/>
<use href="#cir" x="1920.5" y="514.4"/>
<use href="#cir" x="1952.6" y="533.5"/>
<use href="#cir" x="1984.6" y="585.4"/>
<use href="#cir" x="2032.4" y="564.3"/>
<use href="#cir" x="2048.6" y="585.4"/>
<use href="#cir" x="2080.3" y="622.3"/>
<use href="#cir" x="2096.4" y="597.2"/>
<use href="#cir" x="2128.5" y="561.4"/>
<use href="#cir" x="2160.5" y="544.5"/>
<use href="#cir" x="2176.4" y="549.4"/>
<use href="#cir" x="2208.4" y="528.3"/>
<use href="#cir" x="2224.6" y="472.2"/>
<use href="#cir" x="2256.5" y="462.5"/>
<use href="#cir" x="2304.5" y="477.5"/>
<use href="#cir" x="2320.5" y="459.4"/>
<use href="#cir" x="2336.4" y="484.4"/>
<use href="#cir" x="2352.6" y="496.2"/>
<use href="#cir" x="2384.2" y="536.4"/>
<use href="#cir" x="2400.4" y="538.3"/>
<use href="#cir" x="2416.7" y="546.4"/>
<circle cx="736.8" cy="460.7" r="3" fill="#ff8c00"/>
<circle cx="753.0" cy="431.0" r="3" fill="#ff8c00"/>
<circle cx="1089.0" cy="629.8" r="3" fill="#ff8c00"/>
<circle cx="1297.0" cy="505.0" r="3" fill="#ff8c00"/>
<circle cx="1312.8" cy="507.0" r="3" fill="#ff8c00"/>
<circle cx="1472.9" cy="525.8" r="3" fill="#ff8c00"/>
<circle cx="1745.1" cy="494.1" r="3" fill="#ff8c00"/>
<circle cx="1888.8" cy="622.0" r="3" fill="#ff8c00"/>
<circle cx="1937.1" cy="544.8" r="3" fill="#ff8c00"/>
<circle cx="2193.0" cy="477.9" r="3" fill="#ff8c00"/>
<circle cx="2241.1" cy="500.7" r="3" fill="#ff8c00"/>
<circle cx="2273.2" cy="486.8" r="3" fill="#ff8c00"/>
<circle cx="529.0" cy="400.0" r="3" fill="#9932cc"/>
<circle cx="545.0" cy="665.8" r="3" fill="#9932cc"/>
<circle cx="576.8" cy="752.8" r="3" fill="#9932cc"/>
<circle cx="673.0" cy="847.3" r="3" fill="#9932cc"/>
<circle cx="1377.0" cy="896.0" r="3" fill="#9932cc"/>
</g>
<g shape-rendering="crispEdges">
<rect x="384.5" y="98.5" width="2113" height="806" fill="none" stroke="#fff" stroke-width="1"/>
<g clip-path="url(#cs)">
<path d="M433.5 907V1307M481.5 907V1307M529.5 907V1307M577.5 907V1307M625.5 907V1307M673.5 907V1307M721.5 907V1307M769.5 907V1307M817.5 907V1307M865.5 907V1307M913.5 907V1307M961.5 907V1307M1009.5 907V1307M1057.5 907V1307M1105.5 907V1307M1153.5 907V1307M1201.5 907V1307M1249.5 907V1307M1297.5 907V1307M1345.5 907V1307M1393.5 907V1307M1441.5 907V1307M1489.5 907V1307M1537.5 907V1307M1585.5 907V1307M1633.5 907V1307M1681.5 907V1307M1729.5 907V1307M1777.5 907V1307M1825.5 907V1307M1873.5 907V1307M1921.5 907V1307M1969.5 907V1307M2017.5 907V1307M2065.5 907V1307M2113.5 907V1307M2161.5 907V1307M2209.5 907V1307M2257.5 907V1307M2305.5 907V1307M2353.5 907V1307M2401.5 907V1307M2449.5 907V1307M2497.5 907V1307M385 1307.5H2497" stroke="#97a6ba" stroke-width="1" stroke-dasharray="3 3" fill="none"/>
<rect x="383" y="927" width="5" height="380" fill="#ff0000"/>
<rect x="399" y="927" width="5" height="380" fill="#ff0000"/>
<rect x="415" y="927" width="5" height="380" fill="#ff0000"/>
<rect x="431" y="927" width="5" height="380" fill="#ff0000"/>
<rect x="447" y="927" width="5" height="380" fill="#ff0000"/>
<rect x="463" y="927" width="5" height="380" fill="#ff0000"/>
<rect x="479" y="927" width="5" height="380" fill="#ff0000"/>
<rect x="495" y="927" width="5" height="380" fill="#ff0000"/>
<rect x="511" y="927" width="5" height="380" fill="#ff0000"/>
<rect x="527" y="927" width="5" height="380" fill="#ff0000"/>
<rect x="543" y="927" width="5" height="380" fill="#ff0000"/>
<rect x="559" y="927" width="5" height="380" fill="#ff0000"/>
<rect x="575" y="927" width="5" height="380" fill="#ff0000"/>
<rect x="591" y="927" width="5" height="380" fill="#ff0000"/>
<rect x="607" y="927" width="5" height="380" fill="#ff0000"/>
<rect x="623" y="927" width="5" height="380" fill="#ff0000"/>
<rect x="639" y="927" width="5" height="380" fill="#ff0000"/>
<rect x="655" y="927" width="5" height="380" fill="#ff0000"/>
<rect x="671" y="927" width="5" height="380" fill="#ff0000"/>
<rect x="687" y="927" width="5" height="380" fill="#ff0000"/>
<rect x="703" y="927" width="5" height="380" fill="#ff0000"/>
<rect x="719" y="927" width="5" height="380" fill="#ff0000"/>
<rect x="735" y="927" width="5" height="380" fill="#ff0000"/>
<rect x="751" y="927" width="5" height="380" fill="#ff0000"/>
<rect x="767" y="927" width="5" height="380" fill="#ff0000"/>
<rect x="783" y="927" width="5" height="380" fill="#ff0000"/>
<rect x="799" y="927" width="5" height="380" fill="#ff0000"/>
<rect x="815" y="927" width="5" height="380" fill="#ff0000"/>
<rect x="831" y="927" width="5" height="380" fill="#ff0000"/>
<rect x="847" y="927" width="5" height="380" fill="#ff0000"/>
<rect x="863" y="927" width="5" height="380" fill="#ff0000"/>
<rect x="879" y="927" width="5" height="380" fill="#ff0000"/>
<rect x="895" y="927" width="5" height="380" fill="#ff0000"/>
<rect x="911" y="927" width="5" height="380" fill="#ff0000"/>
<rect x="927" y="927" width="5" height="380" fill="#ff0000"/>
<rect x="943" y="927" width="5" height="380" fill="#ff0000"/>
<rect x="959" y="927" width="5" height="380" fill="#1e90ff"/>
<rect x="975" y="927" width="5" height="380" fill="#1e90ff"/>
<rect x="991" y="927" width="5" height="380" fill="#1e90ff"/>
<rect x="1007" y="927" width="5" height="380" fill="#1e90ff"/>
<rect x="1023" y="927" width="5" height="380" fill="#1e90ff"/>
<rect x="1039" y="927" width="5" height="380" fill="#1e90ff"/>
<rect x="1055" y="927" width="5" height="380" fill="#1e90ff"/>
<rect x="1071" y="927" width="5" height="380" fill="#1e90ff"/>
<rect x="1087" y="927" width="5" height="380" fill="#1e90ff"/>
<rect x="1103" y="927" width="5" height="380" fill="#1e90ff"/>
<rect x="1119" y="927" width="5" height="380" fill="#1e90ff"/>
<rect x="1135" y="927" width="5" height="380" fill="#1e90ff"/>
<rect x="1151" y="927" width="5" height="380" fill="#1e90ff"/>
<rect x="1167" y="927" width="5" height="380" fill="#1e90ff"/>
<rect x="1183" y="927" width="5" height="380" fill="#1e90ff"/>
<rect x="1199" y="927" width="5" height="380" fill="#1e90ff"/>
<rect x="1215" y="927" width="5" height="380" fill="#1e90ff"/>
<rect x="1231" y="927" width="5" height="380" fill="#1e90ff"/>
<rect x="1247" y="927" width="5" height="380" fill="#1e90ff"/>
<rect x="1263" y="927" width="5" height="380" fill="#1e90ff"/>
<rect x="1279" y="927" width="5" height="380" fill="#ff0000"/>
<rect x="1295" y="927" width="5" height="380" fill="#ff0000"/>
<rect x="1311" y="927" width="5" height="380" fill="#ff0000"/>
<rect x="1327" y="927" width="5" height="380" fill="#ff0000"/>
<rect x="1343" y="927" width="5" height="380" fill="#ff0000"/>
<rect x="1359" y="927" width="5" height="380" fill="#808080"/>
<rect x="1375" y="927" width="5" height="380" fill="#808080"/>
<rect x="1391" y="927" width="5" height="380" fill="#808080"/>
<rect x="1407" y="927" width="5" height="380" fill="#808080"/>
<rect x="1423" y="927" width="5" height="380" fill="#808080"/>
<rect x="1439" y="927" width="5" height="380" fill="#808080"/>
<rect x="1455" y="927" width="5" height="380" fill="#808080"/>
<rect x="1471" y="927" width="5" height="380" fill="#ff0000"/>
<rect x="1487" y="927" width="5" height="380" fill="#ff0000"/>
<rect x="1503" y="927" width="5" height="380" fill="#ff0000"/>
<rect x="1519" y="927" width="5" height="380" fill="#ff0000"/>
<rect x="1535" y="927" width="5" height="380" fill="#ff0000"/>
<rect x="1551" y="927" width="5" height="380" fill="#ff0000"/>
<rect x="1567" y="927" width="5" height="380" fill="#ff0000"/>
<rect x="1583" y="927" width="5" height="380" fill="#ff0000"/>
<rect x="1599" y="927" width="5" height="380" fill="#ff0000"/>
<rect x="1615" y="927" width="5" height="380" fill="#ff0000"/>
<rect x="1631" y="927" width="5" height="380" fill="#ff0000"/>
<rect x="1647" y="927" width="5" height="380" fill="#808080"/>
<rect x="1663" y="927" width="5" height="380" fill="#808080"/>
<rect x="1679" y="927" width="5" height="380" fill="#808080"/>
<rect x="1695" y="927" width="5" height="380" fill="#808080"/>
<rect x="1711" y="927" width="5" height="380" fill="#ff0000"/>
<rect x="1727" y="927" width="5" height="380" fill="#ff0000"/>
<rect x="1743" y="927" width="5" height="380" fill="#ff0000"/>
<rect x="1759" y="927" width="5" height="380" fill="#ff0000"/>
<rect x="1775" y="927" width="5" height="380" fill="#ff0000"/>
<rect x="1791" y="927" width="5" height="380" fill="#ff0000"/>
<rect x="1807" y="927" width="5" height="380" fill="#ff0000"/>
<rect x="1823" y="927" width="5" height="380" fill="#ff0000"/>
<rect x="1839" y="927" width="5" height="380" fill="#1e90ff"/>
<rect x="1855" y="927" width="5" height="380" fill="#1e90ff"/>
<rect x="1871" y="927" width="5" height="380" fill="#1e90ff"/>
<rect x="1887" y="927" width="5" height="380" fill="#1e90ff"/>
<rect x="1903" y="927" width="5" height="380" fill="#1e90ff"/>
<rect x="1919" y="927" width="5" height="380" fill="#1e90ff"/>
<rect x="1935" y="927" width="5" height="380" fill="#ff0000"/>
<rect x="1951" y="927" width="5" height="380" fill="#ff0000"/>
<rect x="1967" y="927" width="5" height="380" fill="#1e90ff"/>
<rect x="1983" y="927" width="5" height="380" fill="#1e90ff"/>
<rect x="1999" y="927" width="5" height="380" fill="#1e90ff"/>
<rect x="2015" y="927" width="5" height="380" fill="#1e90ff"/>
<rect x="2031" y="927" width="5" height="380" fill="#1e90ff"/>
<rect x="2047" y="927" width="5" height="380" fill="#1e90ff"/>
<rect x="2063" y="927" width="5" height="380" fill="#1e90ff"/>
<rect x="2079" y="927" width="5" height="380" fill="#1e90ff"/>
<rect x="2095" y="927" width="5" height="380" fill="#1e90ff"/>
<rect x="2111" y="927" width="5" height="380" fill="#1e90ff"/>
<rect x="2127" y="927" width="5" height="380" fill="#1e90ff"/>
<rect x="2143" y="927" width="5" height="380" fill="#1e90ff"/>
<rect x="2159" y="927" width="5" height="380" fill="#1e90ff"/>
<rect x="2175" y="927" width="5" height="380" fill="#1e90ff"/>
<rect x="2191" y="927" width="5" height="380" fill="#808080"/>
<rect x="2207" y="927" width="5" height="380" fill="#808080"/>
<rect x="2223" y="927" width="5" height="380" fill="#808080"/>
<rect x="2239" y="927" width="5" height="380" fill="#ff0000"/>
<rect x="2255" y="927" width="5" height="380" fill="#ff0000"/>
<rect x="2271" y="927" width="5" height="380" fill="#ff0000"/>
<rect x="2287" y="927" width="5" height="380" fill="#ff0000"/>
<rect x="2303" y="927" width="5" height="380" fill="#ff0000"/>
<rect x="2319" y="927" width="5" height="380" fill="#ff0000"/>
<rect x="2335" y="927" width="5" height="380" fill="#ff0000"/>
<rect x="2351" y="927" width="5" height="380" fill="#ff0000"/>
<rect x="2367" y="927" width="5" height="380" fill="#ff0000"/>
<rect x="2383" y="927" width="5" height="380" fill="#ff0000"/>
<rect x="2399" y="927" width="5" height="380" fill="#ff0000"/>
<rect x="2415" y="927" width="5" height="380" fill="#ff0000"/>
<rect x="2431" y="927" width="5" height="380" fill="#808080"/>
</g>
<rect x="384.5" y="907.5" width="2113" height="401" fill="none" stroke="#fff" stroke-width="1"/>
<rect x="2497" y="104" width="4" height="1" fill="#fff"/>
<rect x="2497" y="156" width="4" height="1" fill="#fff"/>
<rect x="2497" y="208" width="4" height="1" fill="#fff"/>
<rect x="2497" y="260" width="4" height="1" fill="#fff"/>
<rect x="2497" y="311" width="4" height="1" fill="#fff"/>
<rect x="2497" y="363" width="4" height="1" fill="#fff"/>
<rect x="2497" y="415" width="4" height="1" fill="#fff"/>
<rect x="2497" y="467" width="4" height="1" fill="#fff"/>
<rect x="2497" y="519" width="4" height="1" fill="#fff"/>
<rect x="2497" y="571" width="4" height="1" fill="#fff"/>
<rect x="2497" y="623" width="4" height="1" fill="#fff"/>
<rect x="2497" y="675" width="4" height="1" fill="#fff"/>
<rect x="2497" y="726" width="4" height="1" fill="#fff"/>
<rect x="2497" y="778" width="4" height="1" fill="#fff"/>
<rect x="2497" y="830" width="4" height="1" fill="#fff"/>
<rect x="2497" y="882" width="4" height="1" fill="#fff"/>
<rect x="385" y="1308" width="1" height="5" fill="#fff"/>
<rect x="481" y="1308" width="1" height="5" fill="#fff"/>
<rect x="577" y="1308" width="1" height="5" fill="#fff"/>
<rect x="673" y="1308" width="1" height="5" fill="#fff"/>
<rect x="769" y="1308" width="1" height="5" fill="#fff"/>
<rect x="865" y="1308" width="1" height="5" fill="#fff"/>
<rect x="961" y="1308" width="1" height="5" fill="#fff"/>
<rect x="1057" y="1308" width="1" height="5" fill="#fff"/>
<rect x="1153" y="1308" width="1" height="5" fill="#fff"/>
<rect x="1249" y="1308" width="1" height="5" fill="#fff"/>
<rect x="1345" y="1308" width="1" height="5" fill="#fff"/>
<rect x="1441" y="1308" width="1" height="5" fill="#fff"/>
<rect x="1537" y="1308" width="1" height="5" fill="#fff"/>
<rect x="1633" y="1308" width="1" height="5" fill="#fff"/>
<rect x="1729" y="1308" width="1" height="5" fill="#fff"/>
<rect x="1825" y="1308" width="1" height="5" fill="#fff"/>
<rect x="1921" y="1308" width="1" height="5" fill="#fff"/>
<rect x="2017" y="1308" width="1" height="5" fill="#fff"/>
<rect x="2113" y="1308" width="1" height="5" fill="#fff"/>
<rect x="2209" y="1308" width="1" height="5" fill="#fff"/>
<rect x="2305" y="1308" width="1" height="5" fill="#fff"/>
<rect x="2401" y="1308" width="1" height="5" fill="#fff"/>
<rect x="2497" y="1308" width="4" height="1" fill="#fff"/>
</g>
<rect x="2499" y="710" width="57" height="15" fill="#fff"/>
</svg>
<svg style="position:absolute;left:0;top:0" width="2558" height="1357" font-family='"Liberation Sans", sans-serif'>
<text x="389" y="113" font-size="12" fill="#fff" textLength="277.0" lengthAdjust="spacingAndGlyphs">EURUSD,M15  1.14677 1.14697 1.14673 1.14696</text>
<text x="395" y="127" font-size="16" fill="#ff1493" textLength="406.0" lengthAdjust="spacingAndGlyphs">SmartVSA.com The Smarter Way To Trade Using VSA</text>
<text x="395" y="889" font-size="16" fill="#1e90ff" textLength="414.5" lengthAdjust="spacingAndGlyphs">SMART Volume Analysis Trading System smartvsa.com</text>
<text x="389" y="922" font-size="12" fill="#fff" textLength="350.0" lengthAdjust="spacingAndGlyphs">SMART Directional Volume  SMART Framework Background Bars</text>
<text x="2504" y="109" font-size="12" fill="#fff" textLength="45.5" lengthAdjust="spacingAndGlyphs">1.15405</text>
<text x="2504" y="161" font-size="12" fill="#fff" textLength="45.5" lengthAdjust="spacingAndGlyphs">1.15345</text>
<text x="2504" y="213" font-size="12" fill="#fff" textLength="45.5" lengthAdjust="spacingAndGlyphs">1.15285</text>
<text x="2504" y="265" font-size="12" fill="#fff" textLength="45.5" lengthAdjust="spacingAndGlyphs">1.15225</text>
<text x="2504" y="316" font-size="12" fill="#fff" textLength="45.5" lengthAdjust="spacingAndGlyphs">1.15165</text>
<text x="2504" y="368" font-size="12" fill="#fff" textLength="45.5" lengthAdjust="spacingAndGlyphs">1.15105</text>
<text x="2504" y="420" font-size="12" fill="#fff" textLength="45.5" lengthAdjust="spacingAndGlyphs">1.15045</text>
<text x="2504" y="472" font-size="12" fill="#fff" textLength="45.5" lengthAdjust="spacingAndGlyphs">1.14985</text>
<text x="2504" y="524" font-size="12" fill="#fff" textLength="45.5" lengthAdjust="spacingAndGlyphs">1.14925</text>
<text x="2504" y="576" font-size="12" fill="#fff" textLength="45.5" lengthAdjust="spacingAndGlyphs">1.14865</text>
<text x="2504" y="628" font-size="12" fill="#fff" textLength="45.5" lengthAdjust="spacingAndGlyphs">1.14805</text>
<text x="2504" y="680" font-size="12" fill="#fff" textLength="45.5" lengthAdjust="spacingAndGlyphs">1.14745</text>
<text x="2504" y="731" font-size="12" fill="#fff" textLength="45.5" lengthAdjust="spacingAndGlyphs">1.14685</text>
<text x="2504" y="783" font-size="12" fill="#fff" textLength="45.5" lengthAdjust="spacingAndGlyphs">1.14625</text>
<text x="2504" y="835" font-size="12" fill="#fff" textLength="45.5" lengthAdjust="spacingAndGlyphs">1.14565</text>
<text x="2504" y="887" font-size="12" fill="#fff" textLength="45.5" lengthAdjust="spacingAndGlyphs">1.14505</text>
<text x="2503" y="722" font-size="12" fill="#000">1.14696</text>
<text x="2501" y="920" font-size="12" fill="#fff">1951.95</text>
<text x="2501" y="1305" font-size="12" fill="#fff">0</text>
<text x="385" y="1324" font-size="12" fill="#fff" textLength="67.1" lengthAdjust="spacingAndGlyphs">11 Jan 2019</text>
<text x="481" y="1324" font-size="12" fill="#fff" textLength="70.6" lengthAdjust="spacingAndGlyphs">11 Jan 15:00</text>
<text x="577" y="1324" font-size="12" fill="#fff" textLength="70.6" lengthAdjust="spacingAndGlyphs">11 Jan 16:30</text>
<text x="673" y="1324" font-size="12" fill="#fff" textLength="70.6" lengthAdjust="spacingAndGlyphs">11 Jan 18:00</text>
<text x="769" y="1324" font-size="12" fill="#fff" textLength="70.6" lengthAdjust="spacingAndGlyphs">11 Jan 19:30</text>
<text x="865" y="1324" font-size="12" fill="#fff" textLength="70.6" lengthAdjust="spacingAndGlyphs">11 Jan 21:00</text>
<text x="961" y="1324" font-size="12" fill="#fff" textLength="70.6" lengthAdjust="spacingAndGlyphs">11 Jan 22:30</text>
<text x="1057" y="1324" font-size="12" fill="#fff" textLength="71.5" lengthAdjust="spacingAndGlyphs">14 Jan 00:00</text>
<text x="1153" y="1324" font-size="12" fill="#fff" textLength="71.5" lengthAdjust="spacingAndGlyphs">14 Jan 01:30</text>
<text x="1249" y="1324" font-size="12" fill="#fff" textLength="71.5" lengthAdjust="spacingAndGlyphs">14 Jan 03:00</text>
<text x="1345" y="1324" font-size="12" fill="#fff" textLength="71.5" lengthAdjust="spacingAndGlyphs">14 Jan 04:30</text>
<text x="1441" y="1324" font-size="12" fill="#fff" textLength="71.5" lengthAdjust="spacingAndGlyphs">14 Jan 06:00</text>
<text x="1537" y="1324" font-size="12" fill="#fff" textLength="71.5" lengthAdjust="spacingAndGlyphs">14 Jan 07:30</text>
<text x="1633" y="1324" font-size="12" fill="#fff" textLength="71.5" lengthAdjust="spacingAndGlyphs">14 Jan 09:00</text>
<text x="1729" y="1324" font-size="12" fill="#fff" textLength="71.5" lengthAdjust="spacingAndGlyphs">14 Jan 10:30</text>
<text x="1825" y="1324" font-size="12" fill="#fff" textLength="71.5" lengthAdjust="spacingAndGlyphs">14 Jan 12:00</text>
<text x="1921" y="1324" font-size="12" fill="#fff" textLength="71.5" lengthAdjust="spacingAndGlyphs">14 Jan 13:30</text>
<text x="2017" y="1324" font-size="12" fill="#fff" textLength="71.5" lengthAdjust="spacingAndGlyphs">14 Jan 15:00</text>
<text x="2113" y="1324" font-size="12" fill="#fff" textLength="71.5" lengthAdjust="spacingAndGlyphs">14 Jan 16:30</text>
<text x="2209" y="1324" font-size="12" fill="#fff" textLength="71.5" lengthAdjust="spacingAndGlyphs">14 Jan 18:00</text>
<text x="2305" y="1324" font-size="12" fill="#fff" textLength="71.5" lengthAdjust="spacingAndGlyphs">14 Jan 19:30</text>
<text x="2401" y="1324" font-size="12" fill="#fff" textLength="71.5" lengthAdjust="spacingAndGlyphs">14 Jan 21:00</text>
<text x="2307" y="123" font-size="10" fill="#fff">M1</text>
<rect x="2307" y="125" width="17" height="5" fill="#ff0000"/>
<text x="2328" y="123" font-size="10" fill="#fff">M5</text>
<rect x="2328" y="125" width="17" height="5" fill="#1e90ff"/>
<text x="2349" y="123" font-size="10" fill="#fff">M15</text>
<rect x="2349" y="125" width="17" height="5" fill="#ffd700"/>
<text x="2370" y="123" font-size="10" fill="#fff">M30</text>
<rect x="2370" y="125" width="17" height="5" fill="#ff0000"/>
<text x="2391" y="123" font-size="10" fill="#fff">H1</text>
<rect x="2391" y="125" width="17" height="5" fill="#ff0000"/>
<text x="2412" y="123" font-size="10" fill="#fff">H4</text>
<rect x="2412" y="125" width="17" height="5" fill="#ff0000"/>
<text x="2433" y="123" font-size="10" fill="#fff">D1</text>
<rect x="2433" y="125" width="17" height="5" fill="#1e90ff"/>
<text x="2454" y="123" font-size="10" fill="#fff">W1</text>
<rect x="2454" y="125" width="17" height="5" fill="#1e90ff"/>
<text x="2475" y="123" font-size="10" fill="#fff">MN</text>
<rect x="2475" y="125" width="17" height="5" fill="#1e90ff"/>
<text x="2286" y="132" font-size="10" fill="#fff">VBS</text>
<text x="2492" y="162" font-size="12" fill="#00ced1" text-anchor="end" textLength="188.5" lengthAdjust="spacingAndGlyphs">Current Time Frame Background</text>
<text x="2492" y="174" font-size="12" fill="#fff" text-anchor="end" textLength="205.0" lengthAdjust="spacingAndGlyphs">Visual Background Scanner: Neutral</text>
<text x="2492" y="282" font-size="12" fill="#00ced1" text-anchor="end" textLength="143.0" lengthAdjust="spacingAndGlyphs">SMART Advisor Warning</text>
<text x="2492" y="294" font-size="12" fill="#fff" text-anchor="end" textLength="137.0" lengthAdjust="spacingAndGlyphs">Warning: Indecision bar</text>
<text x="2492" y="306" font-size="12" fill="#fff" text-anchor="end" textLength="322.0" lengthAdjust="spacingAndGlyphs">Caution: Weakness signal after an extended move down</text>
<text x="2492" y="318" font-size="12" fill="#fff" text-anchor="end" textLength="328.0" lengthAdjust="spacingAndGlyphs">Warning: Weakness signal after a short term move down</text>
<g font-family="'Liberation Serif', serif" opacity="0.85">
<text x="606" y="1062" font-size="67" fill="none" textLength="1421.0" lengthAdjust="spacingAndGlyphs" stroke="#1a0000" stroke-width="3.2">WWW.TRADING-SOFTWARE-COLLECTION.COM</text>
<text x="608" y="1121" font-size="49" fill="none" textLength="755.0" lengthAdjust="spacingAndGlyphs" stroke="#1a0000" stroke-width="3.2">ANDREYBBRV@GMAIL.COM</text>
<text x="1418" y="1121" font-size="49" fill="none" textLength="616.0" lengthAdjust="spacingAndGlyphs" stroke="#1a0000" stroke-width="3.2">SKYPE: ANDREYBBRV</text>
<text x="605" y="1061" font-size="67" fill="#a51616" textLength="1421.0" lengthAdjust="spacingAndGlyphs" stroke="#8a1010" stroke-width="1.0">WWW.TRADING-SOFTWARE-COLLECTION.COM</text>
<text x="607" y="1120" font-size="49" fill="#a51616" textLength="755.0" lengthAdjust="spacingAndGlyphs" stroke="#8a1010" stroke-width="1.0">ANDREYBBRV@GMAIL.COM</text>
<text x="1417" y="1120" font-size="49" fill="#a51616" textLength="616.0" lengthAdjust="spacingAndGlyphs" stroke="#8a1010" stroke-width="1.0">SKYPE: ANDREYBBRV</text>
</g>
<rect x="382" y="1332" width="2176" height="2" fill="#ffffff"/>
<rect x="988.5" y="113.5" width="482" height="383" fill="#f0f0f0" stroke="#707070"/>
<rect x="989" y="114" width="481" height="37" fill="#ffffff"/>
<g transform="translate(998,123)"><rect x="0.5" y="0.5" width="14" height="12" fill="#fff" stroke="#3a78c8"/><path d="M3 3v7M3 3l-1.5 2M3 3l1.5 2" stroke="#555"/><rect x="6.5" y="6.5" width="12" height="12" rx="2" fill="#f5d050" stroke="#b09020"/><path d="M13 9 C11.5 9 11 10 10.8 12 L10.3 16" stroke="#6a5a10" fill="none"/></g>
<text x="1023" y="138" font-size="15" fill="#000" textLength="258.0" lengthAdjust="spacingAndGlyphs">Список индикаторов на EURUSD,M15</text>
<text x="1380" y="138" font-size="16.5" fill="#000">?</text>
<path d="M1435 126 L1447 138 M1447 126 L1435 138" stroke="#000" stroke-width="1.1"/>
<rect x="998.5" y="161.5" width="362" height="325" fill="#fff" stroke="#828790"/>
<path d="M1014.5 179 V416 M1041.5 185 V460" stroke="#9a9a9a" stroke-dasharray="1 2"/>
<use href="#minus" x="1009" y="170"/>
<path d="M1020 174.5 H1030" stroke="#9a9a9a" stroke-dasharray="1 2"/>
<use href="#chico" x="1030" y="165"/>
<rect x="1055" y="163" width="101" height="22" fill="#0078d7"/>
<text x="1057" y="179" font-size="13" fill="#fff" textLength="98.5" lengthAdjust="spacingAndGlyphs">Главный график</text>
<path d="M1042 197.5 H1056" stroke="#9a9a9a" stroke-dasharray="1 2"/>
<use href="#indf" x="1057" y="187"/>
<text x="1083" y="201" font-size="13" fill="#000" textLength="88.4" lengthAdjust="spacingAndGlyphs">SMART Advisor</text>
<path d="M1042 219.5 H1056" stroke="#9a9a9a" stroke-dasharray="1 2"/>
<use href="#indf" x="1057" y="209"/>
<text x="1083" y="223" font-size="13" fill="#000" textLength="135.2" lengthAdjust="spacingAndGlyphs">SMART Custom Advisor</text>
<path d="M1042 241.5 H1056" stroke="#9a9a9a" stroke-dasharray="1 2"/>
<use href="#indf" x="1057" y="231"/>
<text x="1083" y="245" font-size="13" fill="#000" textLength="135.2" lengthAdjust="spacingAndGlyphs">SMART Custom Signals</text>
<path d="M1042 263.5 H1056" stroke="#9a9a9a" stroke-dasharray="1 2"/>
<use href="#indf" x="1057" y="253"/>
<text x="1083" y="267" font-size="13" fill="#000" textLength="268.6" lengthAdjust="spacingAndGlyphs">SMART Framework Visual Background Scanner</text>
<path d="M1042 285.5 H1056" stroke="#9a9a9a" stroke-dasharray="1 2"/>
<use href="#indf" x="1057" y="275"/>
<text x="1083" y="289" font-size="13" fill="#000" textLength="156.9" lengthAdjust="spacingAndGlyphs">SMART High Volume Zones</text>
<path d="M1042 307.5 H1056" stroke="#9a9a9a" stroke-dasharray="1 2"/>
<use href="#indf" x="1057" y="297"/>
<text x="1083" y="311" font-size="13" fill="#000" textLength="125.4" lengthAdjust="spacingAndGlyphs">SMART Market Levels</text>
<path d="M1042 329.5 H1056" stroke="#9a9a9a" stroke-dasharray="1 2"/>
<use href="#indf" x="1057" y="319"/>
<text x="1083" y="333" font-size="13" fill="#000" textLength="88.4" lengthAdjust="spacingAndGlyphs">SMART Signals</text>
<path d="M1042 351.5 H1056" stroke="#9a9a9a" stroke-dasharray="1 2"/>
<use href="#indf" x="1057" y="341"/>
<text x="1083" y="355" font-size="13" fill="#000" textLength="77.1" lengthAdjust="spacingAndGlyphs">SMART SOW</text>
<path d="M1042 373.5 H1056" stroke="#9a9a9a" stroke-dasharray="1 2"/>
<use href="#indf" x="1057" y="363"/>
<text x="1083" y="377" font-size="13" fill="#000" textLength="149.9" lengthAdjust="spacingAndGlyphs">SMART System Messages</text>
<path d="M1042 395.5 H1056" stroke="#9a9a9a" stroke-dasharray="1 2"/>
<use href="#indf" x="1057" y="385"/>
<text x="1083" y="399" font-size="13" fill="#000" textLength="111.4" lengthAdjust="spacingAndGlyphs">SMART Zones MTF</text>
<use href="#minus" x="1009" y="412"/>
<path d="M1020 416.5 H1030" stroke="#9a9a9a" stroke-dasharray="1 2"/>
<use href="#chico" x="1030" y="407"/>
<text x="1057" y="421" font-size="13" fill="#000" textLength="112.0" lengthAdjust="spacingAndGlyphs">Окно индикатора 1</text>
<path d="M1042 439.5 H1056" stroke="#9a9a9a" stroke-dasharray="1 2"/>
<use href="#indf" x="1057" y="429"/>
<text x="1083" y="443" font-size="13" fill="#000" textLength="152.0" lengthAdjust="spacingAndGlyphs">SMART Directional Volume</text>
<path d="M1042 461.5 H1056" stroke="#9a9a9a" stroke-dasharray="1 2"/>
<use href="#indf" x="1057" y="451"/>
<text x="1083" y="465" font-size="13" fill="#000" textLength="210.0" lengthAdjust="spacingAndGlyphs">SMART Framework Background Bars</text>
<rect x="1370.5" y="162.5" width="92" height="25" fill="#cccccc" stroke="#bfbfbf"/>
<text x="1416" y="180" font-size="13" fill="#8d8d8d" text-anchor="middle">Свойства</text>
<rect x="1370.5" y="196.5" width="92" height="25" fill="#cccccc" stroke="#bfbfbf"/>
<text x="1416" y="214" font-size="13" fill="#8d8d8d" text-anchor="middle">Удалить</text>
<rect x="1370" y="460" width="93" height="26" fill="#e1e1e1" stroke="#0078d7" stroke-width="2"/>
<text x="1416" y="478" font-size="13" fill="#000" text-anchor="middle">Закрыть</text>
<text x="2" y="1355" font-size="14" fill="#000" textLength="226.0" lengthAdjust="spacingAndGlyphs">Для вызова справки нажмите F1</text>
<rect x="1687" y="1337" width="1" height="20" fill="#a0a0a0"/>
<rect x="1688" y="1337" width="1" height="20" fill="#ffffff"/>
<rect x="1836" y="1337" width="1" height="20" fill="#a0a0a0"/>
<rect x="1837" y="1337" width="1" height="20" fill="#ffffff"/>
<rect x="1967" y="1337" width="1" height="20" fill="#a0a0a0"/>
<rect x="1968" y="1337" width="1" height="20" fill="#ffffff"/>
<rect x="2055" y="1337" width="1" height="20" fill="#a0a0a0"/>
<rect x="2056" y="1337" width="1" height="20" fill="#ffffff"/>
<rect x="2144" y="1337" width="1" height="20" fill="#a0a0a0"/>
<rect x="2145" y="1337" width="1" height="20" fill="#ffffff"/>
<rect x="2229" y="1337" width="1" height="20" fill="#a0a0a0"/>
<rect x="2230" y="1337" width="1" height="20" fill="#ffffff"/>
<rect x="2317" y="1337" width="1" height="20" fill="#a0a0a0"/>
<rect x="2318" y="1337" width="1" height="20" fill="#ffffff"/>
<rect x="2400" y="1337" width="1" height="20" fill="#a0a0a0"/>
<rect x="2401" y="1337" width="1" height="20" fill="#ffffff"/>
<text x="1693" y="1355" font-size="14" fill="#000" textLength="48.5" lengthAdjust="spacingAndGlyphs">Default</text>
<text x="1841" y="1355" font-size="14" fill="#000" textLength="108.7" lengthAdjust="spacingAndGlyphs">2019.01.14 00:00</text>
<text x="1972" y="1355" font-size="14" fill="#000" textLength="68.6" lengthAdjust="spacingAndGlyphs">O: 1.14589</text>
<text x="2061" y="1355" font-size="14" fill="#000" textLength="68.6" lengthAdjust="spacingAndGlyphs">H: 1.14623</text>
<text x="2150" y="1355" font-size="14" fill="#000" textLength="67.0" lengthAdjust="spacingAndGlyphs">L: 1.14578</text>
<text x="2235" y="1355" font-size="14" fill="#000" textLength="68.6" lengthAdjust="spacingAndGlyphs">C: 1.14609</text>
<text x="2322" y="1355" font-size="14" fill="#000" textLength="40.5" lengthAdjust="spacingAndGlyphs">V: 103</text>
<text x="2442" y="1355" font-size="14" fill="#000" textLength="58.5" lengthAdjust="spacingAndGlyphs">290/1 kb</text>
<rect x="2406" y="1340" width="3" height="11" fill="#4a7000"/><rect x="2406" y="1352" width="3" height="4" fill="#003552"/><rect x="2410" y="1340" width="3" height="10" fill="#4a7000"/><rect x="2410" y="1351" width="3" height="5" fill="#003552"/><rect x="2414" y="1340" width="3" height="9" fill="#4a7000"/><rect x="2414" y="1350" width="3" height="6" fill="#003552"/><rect x="2418" y="1340" width="3" height="8" fill="#4a7000"/><rect x="2418" y="1349" width="3" height="7" fill="#003552"/><rect x="2422" y="1340" width="3" height="6" fill="#4a7000"/><rect x="2422" y="1347" width="3" height="9" fill="#003552"/><rect x="2426" y="1340" width="3" height="5" fill="#4a7000"/><rect x="2426" y="1346" width="3" height="10" fill="#003552"/><rect x="2430" y="1340" width="3" height="4" fill="#4a7000"/><rect x="2430" y="1345" width="3" height="11" fill="#003552"/><rect x="2434" y="1340" width="3" height="3" fill="#4a7000"/><rect x="2434" y="1344" width="3" height="12" fill="#003552"/>
</svg>
</body></html>
